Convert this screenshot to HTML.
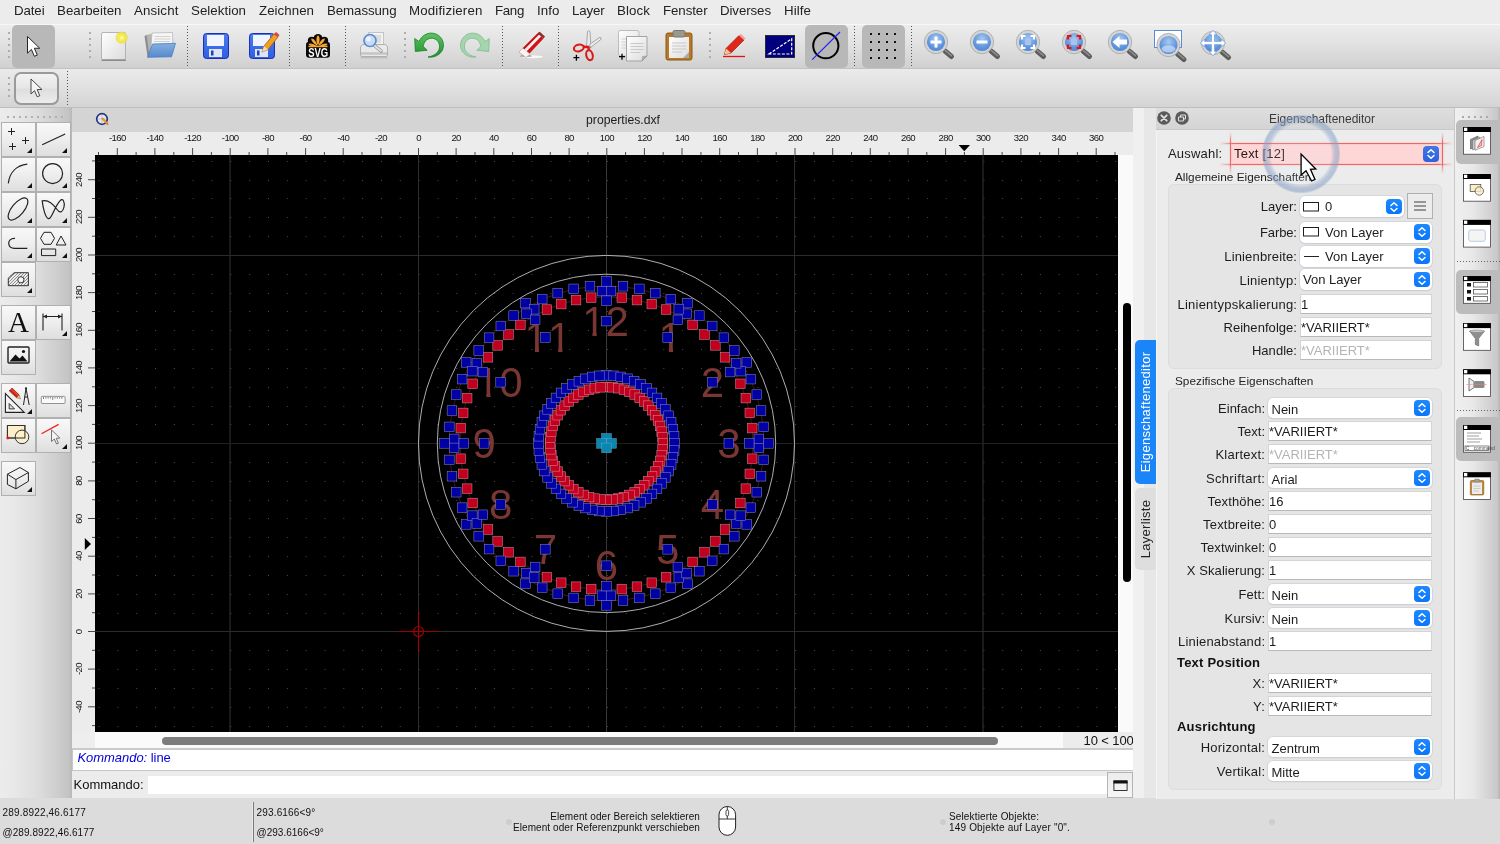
<!DOCTYPE html>
<html lang="de"><head><meta charset="utf-8"><title>properties.dxf</title>
<style>
*{box-sizing:border-box;margin:0;padding:0}
html{background:#ececec}body{will-change:transform;background:transparent}html,body{width:1500px;height:844px;overflow:hidden;font-family:"Liberation Sans",sans-serif;color:#1e1e1e}
.abs{position:absolute}
#menubar{position:absolute;left:0;top:0;width:1500px;height:24px;background:#ececec}
#menubar span{position:absolute;top:2px;font-size:13.3px;line-height:17px;color:#222;white-space:nowrap}
#tb1{position:absolute;left:0;top:24px;width:1500px;height:45px;background:linear-gradient(#ececec,#e3e3e3 40%,#d0d0d0);border-top:1px solid #f7f7f7;border-bottom:1px solid #c2c2c2}
#tb2{position:absolute;left:0;top:69px;width:1500px;height:39px;background:linear-gradient(#eaeaea,#e0e0e0 50%,#d4d4d4);border-bottom:1px solid #bdbdbd}
.hd{position:absolute;width:2px;background-image:linear-gradient(#adadad 2px,transparent 2px);background-size:2px 6px}
.sep{position:absolute;width:1px;background-image:linear-gradient(#555 1px,transparent 1px);background-size:1px 3px}
.selbtn{position:absolute;background:#b8b8b8;border-radius:5px}
svg{position:absolute;overflow:visible}
#left{position:absolute;left:0;top:108px;width:72px;height:690px;background:linear-gradient(90deg,#ececec,#e8e8e8 20%,#dedede 50%,#d0d0d0 75%,#c4c4c4 95%,#b8b8b8)}
.tbtn{position:absolute;width:35px;height:35px;background:linear-gradient(#f8f8f8,#efefef 45%,#dedede);border:1px solid #b0b0b0}
.tbtn i{position:absolute;right:3.2px;bottom:3.2px;width:0;height:0;border-left:5.2px solid transparent;border-bottom:5.2px solid #111}
#tabbar{position:absolute;left:72px;top:108px;width:1061px;height:24px;background:#d4d4d4}
#rulh{position:absolute;left:72px;top:132px;width:1046px;height:23px;background:#ececec;overflow:hidden}
#rulv{position:absolute;left:72px;top:155px;width:23px;height:577px;background:#ececec;overflow:hidden}
.rl{position:absolute;font-size:9.6px;line-height:12px;color:#161616;white-space:nowrap;letter-spacing:-0.62px}
#canvas{position:absolute;left:95px;top:155px;width:1023px;height:577px;background:#000;overflow:hidden}
#status{position:absolute;left:0;top:798px;width:1500px;height:46px;background:#dcdcdc}
.st{position:absolute;font-size:10px;line-height:12px;color:#111;white-space:nowrap}
.lbl{position:absolute;font-size:13px;line-height:16px;color:#1c1c1c;white-space:nowrap;text-align:right}
.inp{position:absolute;height:20px;background:#fff;border:1px solid #d4d4d4;border-bottom-color:#b8b8b8;font-size:13px;line-height:20px;padding-left:0.5px;color:#1c1c1c;white-space:nowrap}
.inp.dis{color:#b4b4b4}
.cmb{position:absolute;height:21px;background:#fff;border-radius:5px;box-shadow:0 0 0 0.8px #cdd1d8,0 1px 1.2px rgba(0,0,0,.16);font-size:13px;line-height:23.5px;padding-left:4px;color:#1c1c1c;white-space:nowrap}
.cmb b{position:absolute;right:2px;top:2.7px;width:15.6px;height:15.4px;border-radius:4px;background:linear-gradient(#1f88ff,#0a76fb)}.cmb.g1{line-height:22px}
.grp{position:absolute;background:#e5e5e5;border:1px solid #dcdcdc;border-radius:6px}
.gt{position:absolute;font-size:11.8px;line-height:14px;color:#222;white-space:nowrap}
.bold{position:absolute;font-size:13px;font-weight:bold;line-height:16px;color:#111;white-space:nowrap}
</style></head><body>
<div id="menubar">
<span style="left:14px;letter-spacing:-0.109px">Datei</span>
<span style="left:57px;letter-spacing:0.017px">Bearbeiten</span>
<span style="left:134px;letter-spacing:0.127px">Ansicht</span>
<span style="left:191px;letter-spacing:0.033px">Selektion</span>
<span style="left:259px;letter-spacing:0.037px">Zeichnen</span>
<span style="left:327px;letter-spacing:-0.080px">Bemassung</span>
<span style="left:409px;letter-spacing:0.151px">Modifizieren</span>
<span style="left:495px;letter-spacing:-0.328px">Fang</span>
<span style="left:537px;letter-spacing:0.078px">Info</span>
<span style="left:572px;letter-spacing:-0.153px">Layer</span>
<span style="left:617px;letter-spacing:0.097px">Block</span>
<span style="left:663px;letter-spacing:-0.085px">Fenster</span>
<span style="left:720px;letter-spacing:-0.092px">Diverses</span>
<span style="left:784px;letter-spacing:0.078px">Hilfe</span>
</div><div id="tb1"></div><div id="tb2"></div>
<div class="selbtn" style="left:12px;top:25px;width:43px;height:43px"></div>
<div class="selbtn" style="left:805px;top:25px;width:43px;height:43px"></div>
<div class="selbtn" style="left:862px;top:25px;width:43px;height:43px"></div>
<div class="hd" style="left:8px;top:32px;height:26px"></div>
<div class="hd" style="left:89px;top:32px;height:26px"></div>
<div class="hd" style="left:404px;top:32px;height:26px"></div>
<div class="hd" style="left:709px;top:32px;height:26px"></div>
<div class="hd" style="left:7.5px;top:77px;height:20px"></div>
<div class="sep" style="left:187px;top:26px;height:41px"></div>
<div class="sep" style="left:289px;top:26px;height:41px"></div>
<div class="sep" style="left:345px;top:26px;height:41px"></div>
<div class="sep" style="left:502px;top:26px;height:41px"></div>
<div class="sep" style="left:558px;top:26px;height:41px"></div>
<div class="sep" style="left:854px;top:26px;height:41px"></div>
<div class="sep" style="left:911px;top:26px;height:41px"></div>
<div class="sep" style="left:67px;top:71px;height:35px"></div>
<div class="abs" style="left:14px;top:72px;width:45px;height:33px;border:2px solid #9a9a9a;border-radius:7px;background:linear-gradient(#f2f2f2,#e6e6e6 48%,#dedede 52%,#ececec)"></div>
<svg style="left:0;top:0" width="1500" height="108">
<defs><radialGradient id="lens" cx="0.5" cy="0.35" r="0.7"><stop offset="0" stop-color="#a8c8f0"/><stop offset="0.6" stop-color="#5f95dc"/><stop offset="1" stop-color="#4a7fd0"/></radialGradient><linearGradient id="pg" x1="0" y1="0" x2="1" y2="1"><stop offset="0" stop-color="#fff"/><stop offset="1" stop-color="#dcdcdc"/></linearGradient><linearGradient id="fl" x1="0" y1="0" x2="0" y2="1"><stop offset="0" stop-color="#4b7cf0"/><stop offset="1" stop-color="#2f5fe0"/></linearGradient><linearGradient id="gr" x1="0" y1="0" x2="0" y2="1"><stop offset="0" stop-color="#5fc45f"/><stop offset="1" stop-color="#1f8f2f"/></linearGradient><radialGradient id="glow"><stop offset="0" stop-color="#fffbe0"/><stop offset="0.35" stop-color="#f8ee50"/><stop offset="0.8" stop-color="#f0e040" stop-opacity="0.85"/><stop offset="1" stop-color="#e8d838" stop-opacity="0"/></radialGradient><linearGradient id="fold" x1="0" y1="0" x2="0" y2="1"><stop offset="0" stop-color="#86b0e2"/><stop offset="1" stop-color="#5688cc"/></linearGradient></defs>
<path transform="translate(27.5,36.5) scale(0.98)" d="M0 0 L0 17 L4 13.2 L7 20.2 L10 19 L7 12 L12.5 12 Z" fill="#fff" stroke="#222" stroke-width="1" stroke-linejoin="round"/>
<path transform="translate(31,79) scale(0.88)" d="M0 0 L0 17 L4 13.2 L7 20.2 L10 19 L7 12 L12.5 12 Z" fill="#f4f4f4" stroke="#333" stroke-width="1" stroke-linejoin="round"/>
<rect x="101.5" y="32.500" width="24" height="27" rx="1.500" fill="url(#pg)" stroke="#b4b4b4"/><path d="M101.500 60.300 H126" stroke="#8c8c8c" stroke-width="1.400"/><circle cx="121.700" cy="37.700" r="6.600" fill="url(#glow)"/>
<path d="M144.500 36 L148 34.500 L150 55.500 L147.500 56.500 Z" fill="#8c8c8c"/><path d="M146.500 35.500 L151.500 33.500 L153 54 L149.500 55.500 Z" fill="#b4b4b4"/><path d="M152 33 L172.500 32.500 L173 50 L150.500 53 Z" fill="#f6f6f6" stroke="#b0b0b0" stroke-width="0.700"/><path d="M154.500 36.500 H170.500 M154.500 39 H170.500 M154 41.500 H170" stroke="#cfcfcf" stroke-width="1"/><path d="M152.500 44 L175.500 43.300 L171.500 56.800 L147.500 57.300 Z" fill="url(#fold)" stroke="#4a7cc0" stroke-width="0.800" stroke-linejoin="round"/>
<rect x="203.5" y="33.5" width="25" height="25" rx="3" fill="url(#fl)" stroke="#1c2fb0"/><rect x="207" y="35" width="17" height="11" fill="#f0f4ff"/><rect x="209" y="49" width="13" height="8" fill="#dde4f4"/><rect x="211" y="50.5" width="2.5" height="5" fill="#2040c0"/>
<rect x="249.5" y="33.5" width="25" height="25" rx="3" fill="url(#fl)" stroke="#1c2fb0"/><rect x="253" y="35" width="17" height="11" fill="#f0f4ff"/><rect x="255" y="49" width="13" height="8" fill="#dde4f4"/><rect x="257" y="50.5" width="2.5" height="5" fill="#2040c0"/>
<path d="M262 52 L264 46 L274 34 L278 37 L268 49.5 Z" fill="#f0a020" stroke="#b05a10" stroke-width="0.8"/><path d="M262 52 L264 46 L268 49.5Z" fill="#f8d8b0"/><path d="M274 34 L276 32 L279.5 35 L278 37Z" fill="#e04040"/>
<g fill="#0a0a0a"><circle cx="318" cy="38.300" r="4.400"/><circle cx="311.800" cy="40.800" r="4"/><circle cx="324.200" cy="40.800" r="4"/><circle cx="309.300" cy="45" r="3.300"/><circle cx="326.700" cy="45" r="3.300"/><rect x="309" y="40" width="18" height="6"/></g><rect x="306" y="44.500" width="24" height="13.200" rx="3" fill="#0a0a0a"/><g fill="#f8a62c"><path d="M318 45.500 C315.800 42 316 36.500 318 35.300 C320 36.500 320.200 42 318 45.500Z"/><path d="M317.300 45.800 C313.800 44.300 310.800 40.500 311.300 38.600 C313.500 38.300 316.800 42 317.300 45.800Z"/><path d="M318.700 45.800 C322.200 44.300 325.200 40.500 324.700 38.600 C322.500 38.300 319.200 42 318.700 45.800Z"/><path d="M316.800 46.300 C313.500 46.800 309.300 45.800 308.300 44 C309.800 42.700 314.300 43.800 316.800 46.300Z"/><path d="M319.200 46.300 C322.500 46.800 326.700 45.800 327.700 44 C326.200 42.700 321.700 43.800 319.200 46.300Z"/><rect x="308.500" y="45.600" width="19" height="1.600"/></g><text x="318.200" y="56.800" font-size="12.400" font-weight="bold" fill="#fff" text-anchor="middle" font-family="'Liberation Sans',sans-serif" textLength="20" lengthAdjust="spacingAndGlyphs">SVG</text>
<rect x="368.5" y="32.5" width="15" height="13" fill="#f2f2f2" stroke="#c4c4c4"/><rect x="371" y="35" width="10" height="8" fill="#dcdcdc"/><path d="M362.5 44.500 L385.500 44.500 L387.500 47 V55 Q387.500 56.500 386 56.500 H362 Q360.500 56.500 360.500 55 V47 Z" fill="#e9e9e9" stroke="#b0b0b0"/><path d="M361 53.500 H387" stroke="#c4c4c4" stroke-width="2.500"/><path d="M360.500 57.800 H387.500" stroke="#9a9a9a" stroke-width="1" opacity="0.6"/><path d="M374.500 45.500 L381 51" stroke="#9a9a9a" stroke-width="3.600" stroke-linecap="round"/><path d="M374.500 45.500 L381 51" stroke="#e4e4e4" stroke-width="1.800" stroke-linecap="round"/><circle cx="370" cy="40.500" r="6" fill="#c8dcf4" stroke="#5a8cd4" stroke-width="1.700"/><circle cx="368.500" cy="39" r="2.500" fill="#eaf2fc"/>
<path d="M414.7 38.5 L415.3 51.5 L427.2 50.3 L423.2 46.5 C424 40.5 428.5 37.8 432.5 38.2 C438 39 440.8 44.500 439 49.500 C437.500 53.500 433.500 56 428 57 C434 58 440 55 442.5 50 C445.5 43 441.500 34.500 433 33.200 C427 32.500 422 35.500 419 41.500 Z" fill="url(#gr)" stroke="#1e7d30" stroke-width="0.8" stroke-linejoin="round"/>
<path transform="translate(904,0) scale(-1,1)" d="M414.7 38.5 L415.3 51.5 L427.2 50.3 L423.2 46.5 C424 40.5 428.5 37.8 432.5 38.2 C438 39 440.8 44.500 439 49.500 C437.500 53.500 433.500 56 428 57 C434 58 440 55 442.5 50 C445.5 43 441.500 34.500 433 33.200 C427 32.500 422 35.500 419 41.500 Z" fill="#9ed4a8" stroke="#74b886" stroke-width="0.8" stroke-linejoin="round" opacity="0.9"/>
<ellipse cx="532" cy="56.800" rx="11" ry="1.500" fill="#fff" opacity="0.85"/><ellipse cx="526" cy="56" rx="6" ry="1.200" fill="#8a4040" opacity="0.5"/><path d="M519 52 L537.500 33.500 L543.500 38.500 L526 57.200 Z" fill="#d01414"/><path d="M522.500 48.500 L539.500 31.800 L542.300 34.200 L525.300 51.200 Z" fill="#c01010"/><path d="M523.800 50 L540.600 33 L542.500 35 L526 52 Z" fill="#fff" opacity="0.92"/><path d="M537.500 33.500 L539.500 31.800 L545 36.500 L543.500 38.500Z" fill="#8a3030"/><path d="M519 52 L522.800 48.200 L530 54 L526 57.400 Z" fill="#f6f6f6" stroke="#c0b0b0" stroke-width="0.500"/>
<path d="M586.500 47 L587.500 31.500 Q588.700 30 590 31.500 L590.800 48 Z" fill="#ececec" stroke="#8a8a8a" stroke-width="0.700"/><path d="M589.500 44.500 L600 37.200 Q601.500 37.500 600.800 39.500 L590.500 47.500 Z" fill="#ececec" stroke="#8a8a8a" stroke-width="0.700"/><ellipse cx="578.800" cy="48" rx="5" ry="3.300" fill="none" stroke="#d81a1a" stroke-width="2.100" transform="rotate(-14 578.800 48)"/><ellipse cx="589.500" cy="55.200" rx="3.200" ry="5" fill="none" stroke="#d81a1a" stroke-width="2.100" transform="rotate(-14 589.500 55.200)"/><path d="M583.500 46.800 L588.500 47 L588.800 50.500" stroke="#d81a1a" stroke-width="2.400" fill="none" stroke-linejoin="round"/><path d="M573.400 57.700 H579.400 M576.400 54.700 V60.700" stroke="#000" stroke-width="1.300"/>
<rect x="618.5" y="30.500" width="20.500" height="25.500" rx="2" fill="url(#pg)" stroke="#bcbcbc"/><path d="M621.500 39H627M621.500 42H627M621.500 45H627M621.500 48H627" stroke="#d0d0d0" stroke-width="1"/><path d="M626.500 36.500 H647 V56 L642 61 H626.500 Z" fill="url(#pg)" stroke="#a4a4a4"/><path d="M642 61 L642.500 56.500 L647 56 Z" fill="#b0b0b0" stroke="#909090" stroke-width="0.500"/><path d="M630.500 43.500H643.500M630.500 46.500H643.500M630.500 49.500H643.500M630.500 52.500H640.500" stroke="#c8c8c8" stroke-width="1"/><path d="M619 56.700 H625 M622 53.700 V59.700" stroke="#000" stroke-width="1.300"/>
<rect x="666" y="33" width="26" height="27" rx="2" fill="#b87828" stroke="#8a5a18"/><rect x="669" y="37" width="20" height="21" fill="url(#pg)"/><rect x="673" y="30.5" width="12" height="6.5" rx="1.5" fill="#9a9a88" stroke="#777"/><path d="M672 43H686M672 46H686M672 49H686M672 52H682" stroke="#c8c8c8" stroke-width="1"/><path d="M683 58 L689 52 L689 58Z" fill="#aaa"/>
<path d="M723 56.5 H745" stroke="#e81010" stroke-width="1.3"/><path d="M724.5 54.5 L726 48.5 L739 35.5 L744 40 L731 53 Z" fill="#e02818" stroke="#a01808" stroke-width="0.7"/><path d="M724.5 54.5 L726 48.5 L731 53Z" fill="#f0c898"/><path d="M739 35.5 L741 34 L745.5 38.5 L744 40Z" fill="#f0a0a0"/>
<rect x="765.5" y="35.500" width="29" height="22" fill="#00007e" stroke="#2a2a3a"/><path d="M769 54 L791.700 38.700 V54 Z" fill="none" stroke="#fff" stroke-width="1.2" stroke-dasharray="3 1.5"/>
<circle cx="825.8" cy="45.7" r="12.6" fill="none" stroke="#000" stroke-width="2"/><path d="M812.2 59.600 L840 32" stroke="#1a28e8" stroke-width="1.200"/>
<g fill="#111">
<rect x="870" y="33" width="2" height="2"/>
<rect x="870" y="41" width="2" height="2"/>
<rect x="870" y="49" width="2" height="2"/>
<rect x="870" y="57" width="2" height="2"/>
<rect x="878" y="33" width="2" height="2"/>
<rect x="878" y="41" width="2" height="2"/>
<rect x="878" y="49" width="2" height="2"/>
<rect x="878" y="57" width="2" height="2"/>
<rect x="886" y="33" width="2" height="2"/>
<rect x="886" y="41" width="2" height="2"/>
<rect x="886" y="49" width="2" height="2"/>
<rect x="886" y="57" width="2" height="2"/>
<rect x="894" y="33" width="2" height="2"/>
<rect x="894" y="41" width="2" height="2"/>
<rect x="894" y="49" width="2" height="2"/>
<rect x="894" y="57" width="2" height="2"/>
</g>
<g><path d="M945 51 L951.5 56.5" stroke="#5c5c5c" stroke-width="5" stroke-linecap="round"/><path d="M945.5 50.6 L951.5 55.6" stroke="#8c8c8c" stroke-width="1.6" stroke-linecap="round"/><circle cx="936" cy="42" r="10.3" fill="url(#lens)" stroke="#d4d4d4" stroke-width="2.4"/><circle cx="936" cy="42" r="11.7" fill="none" stroke="#9c9c9c" stroke-width="0.7"/><path d="M930.5 42H941.5M936 36.5V47.5" stroke="#fff" fill="none" stroke-width="3"/></g>
<g><path d="M991 51 L997.5 56.5" stroke="#5c5c5c" stroke-width="5" stroke-linecap="round"/><path d="M991.5 50.6 L997.5 55.6" stroke="#8c8c8c" stroke-width="1.6" stroke-linecap="round"/><circle cx="982" cy="42" r="10.3" fill="url(#lens)" stroke="#d4d4d4" stroke-width="2.4"/><circle cx="982" cy="42" r="11.7" fill="none" stroke="#9c9c9c" stroke-width="0.7"/><path d="M976.5 42H987.5" stroke="#fff" fill="none" stroke-width="3"/></g>
<g><path d="M1037 51 L1043.5 56.5" stroke="#5c5c5c" stroke-width="5" stroke-linecap="round"/><path d="M1037.5 50.6 L1043.5 55.6" stroke="#8c8c8c" stroke-width="1.6" stroke-linecap="round"/><circle cx="1028" cy="42" r="10.3" fill="url(#lens)" stroke="#d4d4d4" stroke-width="2.4"/><circle cx="1028" cy="42" r="11.7" fill="none" stroke="#9c9c9c" stroke-width="0.7"/><rect x="1025" y="39" width="6" height="6" fill="#a8c4ee"/><path d="M1022 39.5V36H1025.5M1030.5 36H1034V39.5M1034 44.5V48H1030.5M1025.5 48H1022V44.5" stroke="#fff" stroke-width="2.2" fill="none"/></g>
<g><path d="M1083 51 L1089.5 56.5" stroke="#5c5c5c" stroke-width="5" stroke-linecap="round"/><path d="M1083.5 50.6 L1089.5 55.6" stroke="#8c8c8c" stroke-width="1.6" stroke-linecap="round"/><circle cx="1074" cy="42" r="10.3" fill="url(#lens)" stroke="#d4d4d4" stroke-width="2.4"/><circle cx="1074" cy="42" r="11.7" fill="none" stroke="#9c9c9c" stroke-width="0.7"/><rect x="1071" y="39" width="6" height="6" fill="#a8c4ee"/><path d="M1068 39.5V36H1071.5M1076.5 36H1080V39.5M1080 44.5V48H1076.5M1071.5 48H1068V44.5" stroke="#f01010" stroke-width="2.2" fill="none"/></g>
<g><path d="M1129 51 L1135.5 56.5" stroke="#5c5c5c" stroke-width="5" stroke-linecap="round"/><path d="M1129.5 50.6 L1135.5 55.6" stroke="#8c8c8c" stroke-width="1.6" stroke-linecap="round"/><circle cx="1120" cy="42" r="10.3" fill="url(#lens)" stroke="#d4d4d4" stroke-width="2.4"/><circle cx="1120" cy="42" r="11.7" fill="none" stroke="#9c9c9c" stroke-width="0.7"/><path d="M1112.5 42 L1119.5 36 V39.6 H1127 V44.4 H1119.5 V48 Z" fill="#fff"/></g>
<rect x="1154.5" y="30.5" width="27" height="17" fill="#fff" stroke="#5a8ad8"/>
<g><path d="M1177.5 54 L1184.0 59.5" stroke="#5c5c5c" stroke-width="5" stroke-linecap="round"/><path d="M1178.0 53.6 L1184.0 58.6" stroke="#8c8c8c" stroke-width="1.6" stroke-linecap="round"/><circle cx="1168.5" cy="45" r="10.3" fill="url(#lens)" stroke="#d4d4d4" stroke-width="2.4"/><circle cx="1168.5" cy="45" r="11.7" fill="none" stroke="#9c9c9c" stroke-width="0.7"/><ellipse cx="1168.5" cy="49" rx="7" ry="3.5" fill="#cfe0f6" opacity="0.7"/></g>
<g><path d="M1222 52 L1228.5 57.5" stroke="#5c5c5c" stroke-width="5" stroke-linecap="round"/><path d="M1222.5 51.6 L1228.5 56.6" stroke="#8c8c8c" stroke-width="1.6" stroke-linecap="round"/><circle cx="1213" cy="43" r="10.3" fill="url(#lens)" stroke="#d4d4d4" stroke-width="2.4"/><circle cx="1213" cy="43" r="11.7" fill="none" stroke="#9c9c9c" stroke-width="0.7"/><path d="M1202 43H1224M1213 32V54" stroke="#6a9ade" stroke-width="4"/><path d="M1200.3 43l4.500-4v8zM1225.700 43l-4.500-4v8zM1213 30.300l-4 4.500h8zM1213 55.700l-4-4.500h8z" fill="#fff" stroke="#6a9ade" stroke-width="0.800"/><path d="M1202 43H1224M1213 32V54" stroke="#fff" stroke-width="2.400"/></g>
</svg><div id="left">
<div class="abs" style="left:7px;top:8px;width:58px;height:2px;background-image:linear-gradient(90deg,#b0b0b0 2px,transparent 2px);background-size:6px 2px"></div>
<div class="tbtn" style="left:1px;top:14px;height:35px"><i></i></div>
<div class="tbtn" style="left:36px;top:14px;height:35px"><i></i></div>
<div class="tbtn" style="left:1px;top:49px;height:35px"><i></i></div>
<div class="tbtn" style="left:36px;top:49px;height:35px"><i></i></div>
<div class="tbtn" style="left:1px;top:84px;height:35px"><i></i></div>
<div class="tbtn" style="left:36px;top:84px;height:35px"><i></i></div>
<div class="tbtn" style="left:1px;top:119px;height:35px"><i></i></div>
<div class="tbtn" style="left:36px;top:119px;height:35px"><i></i></div>
<div class="tbtn" style="left:1px;top:154px;height:35px"><i></i></div>
<div class="tbtn" style="left:1px;top:197px;height:35px"></div>
<div class="tbtn" style="left:36px;top:197px;height:35px"><i></i></div>
<div class="tbtn" style="left:1px;top:232px;height:35px"></div>
<div class="tbtn" style="left:1px;top:275px;height:35px"><i></i></div>
<div class="tbtn" style="left:36px;top:275px;height:35px"></div>
<div class="tbtn" style="left:1px;top:310px;height:35px"></div>
<div class="tbtn" style="left:36px;top:310px;height:35px"><i></i></div>
<div class="tbtn" style="left:1px;top:353px;height:35px"><i></i></div>
<svg style="left:0;top:0" width="72" height="692" viewBox="0 108 72 692" fill="none" stroke="#222" stroke-width="1.2">
<path d="M8 131.500H15M11.500 128V135M22 140.500H29M25.500 137V144M9 146.500H16M12.500 143V150" stroke-width="1" shape-rendering="crispEdges"/>
<path d="M42.200 144.700 L65.200 134"/>
<path d="M8.300 183.400 C9.500 173 16 165.500 27.300 164.200"/>
<circle cx="52.600" cy="173.600" r="10"/>
<ellipse cx="18" cy="209" rx="13.5" ry="6" transform="rotate(-50 18 209)"/>
<path d="M42.200 200.900 C43 208 45.500 218.500 48.600 218.700 C52 219 54 207 60.400 200.300 C63 198 65 202 64 207 C63 212 60 213.500 57.500 210 C54 205 48 199.500 42.200 200.900 Z"/>
<path d="M15 238.300 C10.500 238 8.500 241 8.700 243.500 C9 247 11.500 248.300 14.500 248.300 H27.300"/>
<path d="M44 232.300 H51 L54.500 238.300 L51 244.300 H44 L40.500 238.300 Z M61 236 L66 245 H56.200Z M41.500 249 H55.700 V255.600 H41.500Z" stroke-width="1"/>
<defs><clipPath id="hc"><path d="M8.300 285.700 V278.100 L14.200 272.700 H28.400 V285.700 Z"/></clipPath></defs><path d="M8.300 285.700 V278.100 L14.200 272.700 H28.400 V285.700 Z" fill="#eeeeee" stroke="none"/><path d="M-3.7 285.7 L9.3 272.7M-0.7 285.7 L12.3 272.7M2.3 285.7 L15.3 272.7M5.3 285.7 L18.3 272.7M8.3 285.7 L21.3 272.7M11.3 285.7 L24.3 272.7M14.3 285.7 L27.3 272.7M17.3 285.7 L30.3 272.7M20.3 285.7 L33.3 272.7M23.3 285.7 L36.3 272.7M26.3 285.7 L39.3 272.7" stroke="#555" stroke-width="0.650" clip-path="url(#hc)"/><path d="M8.300 285.700 V278.100 L14.200 272.700 H28.400 V285.700 Z" fill="none" stroke="#333" stroke-width="1"/><circle cx="20.900" cy="279.800" r="3.100" fill="#f6f6f6" stroke="#333" stroke-width="1"/>
<g transform="translate(0,-1.500)"><path d="M43 332 V315 M62 332 V315 M43 318 H62" stroke-width="1.100"/><path d="M43 318l4-2v4zM62 318l-4-2v4z" fill="#222" stroke="none"/></g>
<g transform="translate(0.500,-1.500)"><rect x="7.500" y="348.500" width="21" height="16" rx="1" stroke-width="1.400"/><path d="M9 363 L15 356 L19 360 L22 357 L27 363 Z" fill="#111" stroke="none"/><circle cx="23" cy="353" r="1.600" fill="#111" stroke="none"/></g>
<path d="M5.400 393.500 V412.400 H24.200 Z" fill="#f4f4f4" stroke="#222" stroke-width="1.100" stroke-linejoin="miter"/><path d="M9.200 403.500 V408.900 H14.500 Z" fill="#e0e0e0" stroke="#222" stroke-width="0.900"/>
<path d="M9.200 390.800 L12 388 L19.300 395 L16.600 397.800 Z" fill="#d8200c" stroke="#7a1408" stroke-width="0.600"/><path d="M16.600 397.800 L19.300 395 L20.600 399 Z" fill="#e8c090" stroke="#7a5030" stroke-width="0.400"/><path d="M10.300 389.700 L11.200 388.800 L18.600 395.800" stroke="#f08070" stroke-width="0.700" fill="none"/>
<path d="M26 388.500 L23.500 405 M26 388.500 L29.200 405 M24.600 397 H27.600" stroke="#222" stroke-width="1" fill="none"/><circle cx="26" cy="388.300" r="1.100" fill="#222" stroke="none"/>
<rect x="41.300" y="396.400" width="23.800" height="7.100" rx="0.800" fill="#fafafa" stroke="#888" stroke-width="0.900"/><path d="M43.500 397V399M45.800 397V398.600M48.100 397V398.600M50.400 397V398.600M52.700 397V400M55 397V398.600M57.300 397V398.600M59.600 397V398.600M61.900 397V399" stroke="#555" stroke-width="0.700"/>
<rect x="7.400" y="425.500" width="17.500" height="12.500" fill="#fdf0c8" stroke="#333" stroke-width="1"/><circle cx="22" cy="436.900" r="6.800" fill="#fdf0c8" fill-opacity="0.750" stroke="#333" stroke-width="1"/><rect x="7.400" y="425.500" width="17.500" height="12.500" fill="none" stroke="#333" stroke-width="0.900"/><circle cx="7.800" cy="438" r="1.400" fill="#f01818" stroke="none"/>
<path d="M41.500 433.800 L58.600 424.400" stroke="#f02020" stroke-width="1.200"/><path d="M51.500 429.800 V441.500 L54.300 439 L56.600 444 L58.400 443.200 L56.200 438.300 L59.800 438.100 Z" fill="#f4f4f4" stroke="#666" stroke-width="0.900" stroke-linejoin="round"/>
<path d="M19.900 467.500 L28.400 472.500 L15.900 479.600 L7.400 474.200 Z M7.400 474.200 V484.500 L15.900 488.800 L28.400 481.300 V472.500 M15.900 479.600 V488.800" stroke-width="1" stroke-linejoin="round"/>
</svg>
<div class="abs" style="left:4.5px;top:197px;width:28px;height:34px;font-family:'Liberation Serif',serif;font-size:29px;line-height:34px;text-align:center;color:#111">A</div>
</div><div id="tabbar"></div>
<div class="abs" style="left:523px;top:112px;width:200px;text-align:center;font-size:12.2px;line-height:16px;color:#1c1c1c;letter-spacing:0px">properties.dxf</div>
<svg style="left:95px;top:111px" width="16" height="16"><circle cx="7" cy="8" r="5.300" fill="#e6e8f0" stroke="#26357c" stroke-width="1.700"/><path d="M3 8H11M7 4V12" stroke="#b8b8c4" stroke-width="0.700"/><path d="M6.500 7.500 L8 6.800 L12.800 12 L11.600 13.300 Z" fill="#f0a020" stroke="#b86a10" stroke-width="0.400"/><path d="M11.600 13.300 L12.800 12 L13.600 13.800Z" fill="#e03020"/></svg>
<div class="abs" style="left:72px;top:132px;width:23px;height:23px;background:#ececec"></div>
<div class="abs" style="left:1118px;top:132px;width:15px;height:23px;background:#ececec"></div><div class="abs" style="left:1118px;top:155px;width:15px;height:577px;background:#fafafa"></div>
<div class="abs" style="left:1123px;top:303px;width:8px;height:279px;background:#000;border-radius:4px"></div>
<div class="abs" style="left:72px;top:732px;width:1061px;height:17px;background:#fafafa"></div>
<div class="abs" style="left:72px;top:732px;width:23px;height:17px;background:#eeeeee"></div>
<div class="abs" style="left:161.5px;top:737px;width:836px;height:7.5px;background:#7c7c7c;border-radius:4px"></div>
<div class="abs" style="left:1063px;top:732px;width:70px;height:17px;background:#ececec"></div>
<div class="abs" style="left:1033.7px;top:733px;width:100px;text-align:right;font-size:13px;line-height:16px;color:#111;letter-spacing:-0.1px">10 &lt; 100</div>
<div class="abs" style="left:72px;top:748px;width:1061px;height:23px;background:#fff;border:1px solid #c6c6c6;border-top:2px solid #cacaca;border-right:none"></div>
<div class="abs" style="left:77.5px;top:750px;font-size:13px;line-height:16px;color:#0000d8;white-space:nowrap;letter-spacing:-0.05px"><i>Kommando:</i> line</div>
<div class="abs" style="left:73.5px;top:777px;font-size:13px;line-height:16px;color:#111;letter-spacing:0px">Kommando:</div>
<div class="abs" style="left:148px;top:776px;width:959px;height:18px;background:#fff"></div>
<div class="abs" style="left:1107px;top:772px;width:26px;height:26px;background:linear-gradient(#ececec,#f6f6f6);border:1px solid #b4b4b4"></div>
<svg style="left:1112.5px;top:779.500px" width="16" height="14"><rect x="0.900" y="0.900" width="13.200" height="9.600" fill="#f2f2f2" stroke="#222" stroke-width="0.900"/><rect x="0.500" y="0.500" width="14" height="3" fill="#111"/></svg>
<div id="status"></div>
<div class="st" style="left:2.5px;top:806.5px;letter-spacing:0.18px">289.8922,46.6177</div>
<div class="st" style="left:2.5px;top:827px;letter-spacing:0.07px">@289.8922,46.6177</div>
<div class="abs" style="left:253px;top:802px;width:1px;height:40px;background:#7a7a7a"></div><div class="abs" style="left:252px;top:802px;width:1px;height:40px;background:#eaeaea"></div>
<div class="st" style="left:256.5px;top:806.5px;letter-spacing:0.17px">293.6166&lt;9°</div>
<div class="st" style="left:256.5px;top:827px;letter-spacing:0.01px">@293.6166&lt;9°</div>
<div class="abs" style="left:506px;top:819px;width:6px;height:6px;border-radius:3px;background:#cdcdcd"></div>
<div class="abs" style="left:940px;top:819px;width:6px;height:6px;border-radius:3px;background:#cdcdcd"></div>
<div class="abs" style="left:1269px;top:819px;width:6px;height:6px;border-radius:3px;background:#cdcdcd"></div>
<div class="st" style="left:400px;width:300px;text-align:right;top:811.4px;letter-spacing:0.08px">Element oder Bereich selektieren</div>
<div class="st" style="left:400px;width:300px;text-align:right;top:822.4px;letter-spacing:0.08px">Element oder Referenzpunkt verschieben</div>
<svg style="left:717px;top:805px" width="22" height="32"><rect x="2" y="1.500" width="16.600" height="28.800" rx="8.300" fill="#fff" stroke="#222" stroke-width="1"/><path d="M2 14 H18.600 M10.300 1.500 V5 M10.300 11 V14" stroke="#222" stroke-width="0.900"/><rect x="9" y="5" width="2.600" height="6" rx="1.300" fill="#fff" stroke="#222" stroke-width="0.800"/></svg>
<div class="st" style="left:949px;top:811px;letter-spacing:0.14px">Selektierte Objekte:</div>
<div class="st" style="left:949px;top:822px;letter-spacing:0.17px">149 Objekte auf Layer "0".</div><div id="rulh">
<span class="rl" style="left:15.3px;width:60px;text-align:center;top:0px">-160</span>
<span class="rl" style="left:52.9px;width:60px;text-align:center;top:0px">-140</span>
<span class="rl" style="left:90.6px;width:60px;text-align:center;top:0px">-120</span>
<span class="rl" style="left:128.2px;width:60px;text-align:center;top:0px">-100</span>
<span class="rl" style="left:165.9px;width:60px;text-align:center;top:0px">-80</span>
<span class="rl" style="left:203.6px;width:60px;text-align:center;top:0px">-60</span>
<span class="rl" style="left:241.2px;width:60px;text-align:center;top:0px">-40</span>
<span class="rl" style="left:278.9px;width:60px;text-align:center;top:0px">-20</span>
<span class="rl" style="left:316.5px;width:60px;text-align:center;top:0px">0</span>
<span class="rl" style="left:354.1px;width:60px;text-align:center;top:0px">20</span>
<span class="rl" style="left:391.8px;width:60px;text-align:center;top:0px">40</span>
<span class="rl" style="left:429.5px;width:60px;text-align:center;top:0px">60</span>
<span class="rl" style="left:467.1px;width:60px;text-align:center;top:0px">80</span>
<span class="rl" style="left:504.8px;width:60px;text-align:center;top:0px">100</span>
<span class="rl" style="left:542.4px;width:60px;text-align:center;top:0px">120</span>
<span class="rl" style="left:580.0px;width:60px;text-align:center;top:0px">140</span>
<span class="rl" style="left:617.7px;width:60px;text-align:center;top:0px">160</span>
<span class="rl" style="left:655.4px;width:60px;text-align:center;top:0px">180</span>
<span class="rl" style="left:693.0px;width:60px;text-align:center;top:0px">200</span>
<span class="rl" style="left:730.7px;width:60px;text-align:center;top:0px">220</span>
<span class="rl" style="left:768.3px;width:60px;text-align:center;top:0px">240</span>
<span class="rl" style="left:806.0px;width:60px;text-align:center;top:0px">260</span>
<span class="rl" style="left:843.6px;width:60px;text-align:center;top:0px">280</span>
<span class="rl" style="left:881.2px;width:60px;text-align:center;top:0px">300</span>
<span class="rl" style="left:918.9px;width:60px;text-align:center;top:0px">320</span>
<span class="rl" style="left:956.6px;width:60px;text-align:center;top:0px">340</span>
<span class="rl" style="left:994.2px;width:60px;text-align:center;top:0px">360</span>
<svg style="left:0;top:0" width="1046" height="23"><g stroke="#4a4a4a" stroke-width="1">
<line x1="26.5" y1="20" x2="26.5" y2="23"/>
<line x1="45.3" y1="16" x2="45.3" y2="23"/>
<line x1="64.1" y1="20" x2="64.1" y2="23"/>
<line x1="82.9" y1="16" x2="82.9" y2="23"/>
<line x1="101.8" y1="20" x2="101.8" y2="23"/>
<line x1="120.6" y1="16" x2="120.6" y2="23"/>
<line x1="139.4" y1="20" x2="139.4" y2="23"/>
<line x1="158.2" y1="16" x2="158.2" y2="23"/>
<line x1="177.1" y1="20" x2="177.1" y2="23"/>
<line x1="195.9" y1="16" x2="195.9" y2="23"/>
<line x1="214.7" y1="20" x2="214.7" y2="23"/>
<line x1="233.6" y1="16" x2="233.6" y2="23"/>
<line x1="252.4" y1="20" x2="252.4" y2="23"/>
<line x1="271.2" y1="16" x2="271.2" y2="23"/>
<line x1="290.0" y1="20" x2="290.0" y2="23"/>
<line x1="308.9" y1="16" x2="308.9" y2="23"/>
<line x1="327.7" y1="20" x2="327.7" y2="23"/>
<line x1="346.5" y1="16" x2="346.5" y2="23"/>
<line x1="365.3" y1="20" x2="365.3" y2="23"/>
<line x1="384.1" y1="16" x2="384.1" y2="23"/>
<line x1="403.0" y1="20" x2="403.0" y2="23"/>
<line x1="421.8" y1="16" x2="421.8" y2="23"/>
<line x1="440.6" y1="20" x2="440.6" y2="23"/>
<line x1="459.5" y1="16" x2="459.5" y2="23"/>
<line x1="478.3" y1="20" x2="478.3" y2="23"/>
<line x1="497.1" y1="16" x2="497.1" y2="23"/>
<line x1="515.9" y1="20" x2="515.9" y2="23"/>
<line x1="534.8" y1="16" x2="534.8" y2="23"/>
<line x1="553.6" y1="20" x2="553.6" y2="23"/>
<line x1="572.4" y1="16" x2="572.4" y2="23"/>
<line x1="591.2" y1="20" x2="591.2" y2="23"/>
<line x1="610.0" y1="16" x2="610.0" y2="23"/>
<line x1="628.9" y1="20" x2="628.9" y2="23"/>
<line x1="647.7" y1="16" x2="647.7" y2="23"/>
<line x1="666.5" y1="20" x2="666.5" y2="23"/>
<line x1="685.4" y1="16" x2="685.4" y2="23"/>
<line x1="704.2" y1="20" x2="704.2" y2="23"/>
<line x1="723.0" y1="16" x2="723.0" y2="23"/>
<line x1="741.8" y1="20" x2="741.8" y2="23"/>
<line x1="760.7" y1="16" x2="760.7" y2="23"/>
<line x1="779.5" y1="20" x2="779.5" y2="23"/>
<line x1="798.3" y1="16" x2="798.3" y2="23"/>
<line x1="817.1" y1="20" x2="817.1" y2="23"/>
<line x1="836.0" y1="16" x2="836.0" y2="23"/>
<line x1="854.8" y1="20" x2="854.8" y2="23"/>
<line x1="873.6" y1="16" x2="873.6" y2="23"/>
<line x1="892.4" y1="20" x2="892.4" y2="23"/>
<line x1="911.2" y1="16" x2="911.2" y2="23"/>
<line x1="930.1" y1="20" x2="930.1" y2="23"/>
<line x1="948.9" y1="16" x2="948.9" y2="23"/>
<line x1="967.7" y1="20" x2="967.7" y2="23"/>
<line x1="986.6" y1="16" x2="986.6" y2="23"/>
<line x1="1005.4" y1="20" x2="1005.4" y2="23"/>
<line x1="1024.2" y1="16" x2="1024.2" y2="23"/>
<line x1="1043.0" y1="20" x2="1043.0" y2="23"/>
</g><path d="M886.600 13 h11.400 l-5.700 6.200z" fill="#000"/></svg></div>
<div id="rulv">
<span class="rl" style="left:-23px;width:60px;text-align:center;top:545.8px;transform:rotate(-90deg)">-40</span>
<span class="rl" style="left:-23px;width:60px;text-align:center;top:508.1px;transform:rotate(-90deg)">-20</span>
<span class="rl" style="left:-23px;width:60px;text-align:center;top:470.5px;transform:rotate(-90deg)">0</span>
<span class="rl" style="left:-23px;width:60px;text-align:center;top:432.9px;transform:rotate(-90deg)">20</span>
<span class="rl" style="left:-23px;width:60px;text-align:center;top:395.2px;transform:rotate(-90deg)">40</span>
<span class="rl" style="left:-23px;width:60px;text-align:center;top:357.5px;transform:rotate(-90deg)">60</span>
<span class="rl" style="left:-23px;width:60px;text-align:center;top:319.9px;transform:rotate(-90deg)">80</span>
<span class="rl" style="left:-23px;width:60px;text-align:center;top:282.2px;transform:rotate(-90deg)">100</span>
<span class="rl" style="left:-23px;width:60px;text-align:center;top:244.6px;transform:rotate(-90deg)">120</span>
<span class="rl" style="left:-23px;width:60px;text-align:center;top:206.9px;transform:rotate(-90deg)">140</span>
<span class="rl" style="left:-23px;width:60px;text-align:center;top:169.3px;transform:rotate(-90deg)">160</span>
<span class="rl" style="left:-23px;width:60px;text-align:center;top:131.6px;transform:rotate(-90deg)">180</span>
<span class="rl" style="left:-23px;width:60px;text-align:center;top:94.0px;transform:rotate(-90deg)">200</span>
<span class="rl" style="left:-23px;width:60px;text-align:center;top:56.3px;transform:rotate(-90deg)">220</span>
<span class="rl" style="left:-23px;width:60px;text-align:center;top:18.7px;transform:rotate(-90deg)">240</span>
<svg style="left:0;top:0" width="23" height="577"><g stroke="#4a4a4a" stroke-width="1">
<line x1="20" y1="570.6" x2="23" y2="570.6"/>
<line x1="16" y1="551.8" x2="23" y2="551.8"/>
<line x1="20" y1="533.0" x2="23" y2="533.0"/>
<line x1="16" y1="514.1" x2="23" y2="514.1"/>
<line x1="20" y1="495.3" x2="23" y2="495.3"/>
<line x1="16" y1="476.5" x2="23" y2="476.5"/>
<line x1="20" y1="457.7" x2="23" y2="457.7"/>
<line x1="16" y1="438.9" x2="23" y2="438.9"/>
<line x1="20" y1="420.0" x2="23" y2="420.0"/>
<line x1="16" y1="401.2" x2="23" y2="401.2"/>
<line x1="20" y1="382.4" x2="23" y2="382.4"/>
<line x1="16" y1="363.5" x2="23" y2="363.5"/>
<line x1="20" y1="344.7" x2="23" y2="344.7"/>
<line x1="16" y1="325.9" x2="23" y2="325.9"/>
<line x1="20" y1="307.1" x2="23" y2="307.1"/>
<line x1="16" y1="288.2" x2="23" y2="288.2"/>
<line x1="20" y1="269.4" x2="23" y2="269.4"/>
<line x1="16" y1="250.6" x2="23" y2="250.6"/>
<line x1="20" y1="231.8" x2="23" y2="231.8"/>
<line x1="16" y1="212.9" x2="23" y2="212.9"/>
<line x1="20" y1="194.1" x2="23" y2="194.1"/>
<line x1="16" y1="175.3" x2="23" y2="175.3"/>
<line x1="20" y1="156.5" x2="23" y2="156.5"/>
<line x1="16" y1="137.6" x2="23" y2="137.6"/>
<line x1="20" y1="118.8" x2="23" y2="118.8"/>
<line x1="16" y1="100.0" x2="23" y2="100.0"/>
<line x1="20" y1="81.2" x2="23" y2="81.2"/>
<line x1="16" y1="62.3" x2="23" y2="62.3"/>
<line x1="20" y1="43.5" x2="23" y2="43.5"/>
<line x1="16" y1="24.7" x2="23" y2="24.7"/>
<line x1="20" y1="5.9" x2="23" y2="5.9"/>
</g><path d="M12.800 383 v12 l6.200 -6z" fill="#000"/></svg></div><div id="canvas"><svg style="left:0;top:0" width="1023" height="577" viewBox="95 155 1023 577">
<g stroke="#4e4e4e" stroke-width="1" stroke-dasharray="1 17.825">
<line x1="79.75" y1="744.5" x2="1118" y2="744.5"/>
<line x1="79.75" y1="726.5" x2="1118" y2="726.5"/>
<line x1="79.75" y1="707.5" x2="1118" y2="707.5"/>
<line x1="79.75" y1="688.5" x2="1118" y2="688.5"/>
<line x1="79.75" y1="669.5" x2="1118" y2="669.5"/>
<line x1="79.75" y1="650.5" x2="1118" y2="650.5"/>
<line x1="79.75" y1="631.5" x2="1118" y2="631.5"/>
<line x1="79.75" y1="613.5" x2="1118" y2="613.5"/>
<line x1="79.75" y1="594.5" x2="1118" y2="594.5"/>
<line x1="79.75" y1="575.5" x2="1118" y2="575.5"/>
<line x1="79.75" y1="556.5" x2="1118" y2="556.5"/>
<line x1="79.75" y1="537.5" x2="1118" y2="537.5"/>
<line x1="79.75" y1="518.5" x2="1118" y2="518.5"/>
<line x1="79.75" y1="500.5" x2="1118" y2="500.5"/>
<line x1="79.75" y1="481.5" x2="1118" y2="481.5"/>
<line x1="79.75" y1="462.5" x2="1118" y2="462.5"/>
<line x1="79.75" y1="443.5" x2="1118" y2="443.5"/>
<line x1="79.75" y1="424.5" x2="1118" y2="424.5"/>
<line x1="79.75" y1="406.5" x2="1118" y2="406.5"/>
<line x1="79.75" y1="387.5" x2="1118" y2="387.5"/>
<line x1="79.75" y1="368.5" x2="1118" y2="368.5"/>
<line x1="79.75" y1="349.5" x2="1118" y2="349.5"/>
<line x1="79.75" y1="330.5" x2="1118" y2="330.5"/>
<line x1="79.75" y1="311.5" x2="1118" y2="311.5"/>
<line x1="79.75" y1="293.5" x2="1118" y2="293.5"/>
<line x1="79.75" y1="274.5" x2="1118" y2="274.5"/>
<line x1="79.75" y1="255.5" x2="1118" y2="255.5"/>
<line x1="79.75" y1="236.5" x2="1118" y2="236.5"/>
<line x1="79.75" y1="217.5" x2="1118" y2="217.5"/>
<line x1="79.75" y1="198.5" x2="1118" y2="198.5"/>
<line x1="79.75" y1="180.5" x2="1118" y2="180.5"/>
<line x1="79.75" y1="161.5" x2="1118" y2="161.5"/>
</g>
<g stroke-width="1">
<line x1="230.0" y1="155" x2="230.0" y2="732" stroke="#343434"/>
<line x1="418.5" y1="155" x2="418.5" y2="732" stroke="#2e2e2e"/>
<line x1="606.5" y1="155" x2="606.5" y2="732" stroke="#383838"/>
<line x1="794.5" y1="155" x2="794.5" y2="732" stroke="#2c2c2c"/>
<line x1="983.0" y1="155" x2="983.0" y2="732" stroke="#343434"/>
<line x1="95" y1="255.5" x2="1118" y2="255.5" stroke="#2c2c2c"/>
<line x1="95" y1="443.5" x2="1118" y2="443.5" stroke="#202020"/>
<line x1="95" y1="631.5" x2="1118" y2="631.5" stroke="#2c2c2c"/>
</g>
<g stroke="#a00000" stroke-width="1.2" fill="none"><line x1="398.5" y1="631.5" x2="438.5" y2="631.5"/><line x1="418.5" y1="611.5" x2="418.5" y2="651.5"/><circle cx="418.5" cy="631.5" r="5"/></g>
<g fill="none" stroke="#cccccc" stroke-width="0.85"><circle cx="606.5" cy="443.4" r="188"/><circle cx="606.5" cy="443.4" r="169.2"/></g>
<g fill="none" stroke="#6a2a22" stroke-width="0.6"><circle cx="606.5" cy="443.4" r="157.5"/><circle cx="606.5" cy="443.4" r="146.5"/></g>
<defs><clipPath id="c1"><path d="M0 -30.51 H14.54 V2 H10.27 V-4.68 H0 Z"/></clipPath></defs>
<g font-family="'Liberation Sans',sans-serif" font-size="42.0" fill="#793632">
<g transform="translate(658.55,352.13)" clip-path="url(#c1)"><text x="0" y="0">1</text></g>
<text x="700.72" y="396.89">2</text>
<text x="717.21" y="458.04">3</text>
<text x="700.87" y="519.19">4</text>
<text x="656.01" y="563.96">5</text>
<text x="594.65" y="580.34">6</text>
<text x="533.66" y="563.96">7</text>
<text x="488.89" y="519.19">8</text>
<text x="472.56" y="458.04">9</text>
<g transform="translate(475.99,396.89)" clip-path="url(#c1)"><text x="0" y="0">1</text></g>
<text x="499.35" y="396.89">0</text>
<g transform="translate(524.57,352.13)" clip-path="url(#c1)"><text x="0" y="0">1</text></g>
<g transform="translate(547.93,352.13)" clip-path="url(#c1)"><text x="0" y="0">1</text></g>
<g transform="translate(582.16,335.74)" clip-path="url(#c1)"><text x="0" y="0">1</text></g>
<text x="605.52" y="335.74">2</text>
</g>
<g>
<rect x="601.70" y="382.20" width="9.6" height="9.6" fill="#c0001e" stroke="#d890a0" stroke-width="0.5"/>
<rect x="607.60" y="382.51" width="9.6" height="9.6" fill="#c0001e" stroke="#d890a0" stroke-width="0.5"/>
<rect x="613.43" y="383.43" width="9.6" height="9.6" fill="#c0001e" stroke="#d890a0" stroke-width="0.5"/>
<rect x="619.13" y="384.96" width="9.6" height="9.6" fill="#c0001e" stroke="#d890a0" stroke-width="0.5"/>
<rect x="624.64" y="387.08" width="9.6" height="9.6" fill="#c0001e" stroke="#d890a0" stroke-width="0.5"/>
<rect x="629.90" y="389.76" width="9.6" height="9.6" fill="#c0001e" stroke="#d890a0" stroke-width="0.5"/>
<rect x="634.85" y="392.97" width="9.6" height="9.6" fill="#c0001e" stroke="#d890a0" stroke-width="0.5"/>
<rect x="639.44" y="396.69" width="9.6" height="9.6" fill="#c0001e" stroke="#d890a0" stroke-width="0.5"/>
<rect x="643.61" y="400.86" width="9.6" height="9.6" fill="#c0001e" stroke="#d890a0" stroke-width="0.5"/>
<rect x="647.33" y="405.45" width="9.6" height="9.6" fill="#c0001e" stroke="#d890a0" stroke-width="0.5"/>
<rect x="650.54" y="410.40" width="9.6" height="9.6" fill="#c0001e" stroke="#d890a0" stroke-width="0.5"/>
<rect x="653.22" y="415.66" width="9.6" height="9.6" fill="#c0001e" stroke="#d890a0" stroke-width="0.5"/>
<rect x="655.34" y="421.17" width="9.6" height="9.6" fill="#c0001e" stroke="#d890a0" stroke-width="0.5"/>
<rect x="656.87" y="426.87" width="9.6" height="9.6" fill="#c0001e" stroke="#d890a0" stroke-width="0.5"/>
<rect x="657.79" y="432.70" width="9.6" height="9.6" fill="#c0001e" stroke="#d890a0" stroke-width="0.5"/>
<rect x="658.10" y="438.60" width="9.6" height="9.6" fill="#c0001e" stroke="#d890a0" stroke-width="0.5"/>
<rect x="657.79" y="444.50" width="9.6" height="9.6" fill="#c0001e" stroke="#d890a0" stroke-width="0.5"/>
<rect x="656.87" y="450.33" width="9.6" height="9.6" fill="#c0001e" stroke="#d890a0" stroke-width="0.5"/>
<rect x="655.34" y="456.03" width="9.6" height="9.6" fill="#c0001e" stroke="#d890a0" stroke-width="0.5"/>
<rect x="653.22" y="461.54" width="9.6" height="9.6" fill="#c0001e" stroke="#d890a0" stroke-width="0.5"/>
<rect x="650.54" y="466.80" width="9.6" height="9.6" fill="#c0001e" stroke="#d890a0" stroke-width="0.5"/>
<rect x="647.33" y="471.75" width="9.6" height="9.6" fill="#c0001e" stroke="#d890a0" stroke-width="0.5"/>
<rect x="643.61" y="476.34" width="9.6" height="9.6" fill="#c0001e" stroke="#d890a0" stroke-width="0.5"/>
<rect x="639.44" y="480.51" width="9.6" height="9.6" fill="#c0001e" stroke="#d890a0" stroke-width="0.5"/>
<rect x="634.85" y="484.23" width="9.6" height="9.6" fill="#c0001e" stroke="#d890a0" stroke-width="0.5"/>
<rect x="629.90" y="487.44" width="9.6" height="9.6" fill="#c0001e" stroke="#d890a0" stroke-width="0.5"/>
<rect x="624.64" y="490.12" width="9.6" height="9.6" fill="#c0001e" stroke="#d890a0" stroke-width="0.5"/>
<rect x="619.13" y="492.24" width="9.6" height="9.6" fill="#c0001e" stroke="#d890a0" stroke-width="0.5"/>
<rect x="613.43" y="493.77" width="9.6" height="9.6" fill="#c0001e" stroke="#d890a0" stroke-width="0.5"/>
<rect x="607.60" y="494.69" width="9.6" height="9.6" fill="#c0001e" stroke="#d890a0" stroke-width="0.5"/>
<rect x="601.70" y="495.00" width="9.6" height="9.6" fill="#c0001e" stroke="#d890a0" stroke-width="0.5"/>
<rect x="595.80" y="494.69" width="9.6" height="9.6" fill="#c0001e" stroke="#d890a0" stroke-width="0.5"/>
<rect x="589.97" y="493.77" width="9.6" height="9.6" fill="#c0001e" stroke="#d890a0" stroke-width="0.5"/>
<rect x="584.27" y="492.24" width="9.6" height="9.6" fill="#c0001e" stroke="#d890a0" stroke-width="0.5"/>
<rect x="578.76" y="490.12" width="9.6" height="9.6" fill="#c0001e" stroke="#d890a0" stroke-width="0.5"/>
<rect x="573.50" y="487.44" width="9.6" height="9.6" fill="#c0001e" stroke="#d890a0" stroke-width="0.5"/>
<rect x="568.55" y="484.23" width="9.6" height="9.6" fill="#c0001e" stroke="#d890a0" stroke-width="0.5"/>
<rect x="563.96" y="480.51" width="9.6" height="9.6" fill="#c0001e" stroke="#d890a0" stroke-width="0.5"/>
<rect x="559.79" y="476.34" width="9.6" height="9.6" fill="#c0001e" stroke="#d890a0" stroke-width="0.5"/>
<rect x="556.07" y="471.75" width="9.6" height="9.6" fill="#c0001e" stroke="#d890a0" stroke-width="0.5"/>
<rect x="552.86" y="466.80" width="9.6" height="9.6" fill="#c0001e" stroke="#d890a0" stroke-width="0.5"/>
<rect x="550.18" y="461.54" width="9.6" height="9.6" fill="#c0001e" stroke="#d890a0" stroke-width="0.5"/>
<rect x="548.06" y="456.03" width="9.6" height="9.6" fill="#c0001e" stroke="#d890a0" stroke-width="0.5"/>
<rect x="546.53" y="450.33" width="9.6" height="9.6" fill="#c0001e" stroke="#d890a0" stroke-width="0.5"/>
<rect x="545.61" y="444.50" width="9.6" height="9.6" fill="#c0001e" stroke="#d890a0" stroke-width="0.5"/>
<rect x="545.30" y="438.60" width="9.6" height="9.6" fill="#c0001e" stroke="#d890a0" stroke-width="0.5"/>
<rect x="545.61" y="432.70" width="9.6" height="9.6" fill="#c0001e" stroke="#d890a0" stroke-width="0.5"/>
<rect x="546.53" y="426.87" width="9.6" height="9.6" fill="#c0001e" stroke="#d890a0" stroke-width="0.5"/>
<rect x="548.06" y="421.17" width="9.6" height="9.6" fill="#c0001e" stroke="#d890a0" stroke-width="0.5"/>
<rect x="550.18" y="415.66" width="9.6" height="9.6" fill="#c0001e" stroke="#d890a0" stroke-width="0.5"/>
<rect x="552.86" y="410.40" width="9.6" height="9.6" fill="#c0001e" stroke="#d890a0" stroke-width="0.5"/>
<rect x="556.07" y="405.45" width="9.6" height="9.6" fill="#c0001e" stroke="#d890a0" stroke-width="0.5"/>
<rect x="559.79" y="400.86" width="9.6" height="9.6" fill="#c0001e" stroke="#d890a0" stroke-width="0.5"/>
<rect x="563.96" y="396.69" width="9.6" height="9.6" fill="#c0001e" stroke="#d890a0" stroke-width="0.5"/>
<rect x="568.55" y="392.97" width="9.6" height="9.6" fill="#c0001e" stroke="#d890a0" stroke-width="0.5"/>
<rect x="573.50" y="389.76" width="9.6" height="9.6" fill="#c0001e" stroke="#d890a0" stroke-width="0.5"/>
<rect x="578.76" y="387.08" width="9.6" height="9.6" fill="#c0001e" stroke="#d890a0" stroke-width="0.5"/>
<rect x="584.27" y="384.96" width="9.6" height="9.6" fill="#c0001e" stroke="#d890a0" stroke-width="0.5"/>
<rect x="589.97" y="383.43" width="9.6" height="9.6" fill="#c0001e" stroke="#d890a0" stroke-width="0.5"/>
<rect x="595.80" y="382.51" width="9.6" height="9.6" fill="#c0001e" stroke="#d890a0" stroke-width="0.5"/>
<rect x="601.70" y="370.60" width="9.6" height="9.6" fill="#0000a4" stroke="#8c8cc4" stroke-width="0.5"/>
<rect x="608.81" y="370.97" width="9.6" height="9.6" fill="#0000a4" stroke="#8c8cc4" stroke-width="0.5"/>
<rect x="615.84" y="372.09" width="9.6" height="9.6" fill="#0000a4" stroke="#8c8cc4" stroke-width="0.5"/>
<rect x="622.71" y="373.93" width="9.6" height="9.6" fill="#0000a4" stroke="#8c8cc4" stroke-width="0.5"/>
<rect x="629.36" y="376.48" width="9.6" height="9.6" fill="#0000a4" stroke="#8c8cc4" stroke-width="0.5"/>
<rect x="635.70" y="379.71" width="9.6" height="9.6" fill="#0000a4" stroke="#8c8cc4" stroke-width="0.5"/>
<rect x="641.67" y="383.59" width="9.6" height="9.6" fill="#0000a4" stroke="#8c8cc4" stroke-width="0.5"/>
<rect x="647.20" y="388.07" width="9.6" height="9.6" fill="#0000a4" stroke="#8c8cc4" stroke-width="0.5"/>
<rect x="652.23" y="393.10" width="9.6" height="9.6" fill="#0000a4" stroke="#8c8cc4" stroke-width="0.5"/>
<rect x="656.71" y="398.63" width="9.6" height="9.6" fill="#0000a4" stroke="#8c8cc4" stroke-width="0.5"/>
<rect x="660.59" y="404.60" width="9.6" height="9.6" fill="#0000a4" stroke="#8c8cc4" stroke-width="0.5"/>
<rect x="663.82" y="410.94" width="9.6" height="9.6" fill="#0000a4" stroke="#8c8cc4" stroke-width="0.5"/>
<rect x="666.37" y="417.59" width="9.6" height="9.6" fill="#0000a4" stroke="#8c8cc4" stroke-width="0.5"/>
<rect x="668.21" y="424.46" width="9.6" height="9.6" fill="#0000a4" stroke="#8c8cc4" stroke-width="0.5"/>
<rect x="669.33" y="431.49" width="9.6" height="9.6" fill="#0000a4" stroke="#8c8cc4" stroke-width="0.5"/>
<rect x="669.70" y="438.60" width="9.6" height="9.6" fill="#0000a4" stroke="#8c8cc4" stroke-width="0.5"/>
<rect x="669.33" y="445.71" width="9.6" height="9.6" fill="#0000a4" stroke="#8c8cc4" stroke-width="0.5"/>
<rect x="668.21" y="452.74" width="9.6" height="9.6" fill="#0000a4" stroke="#8c8cc4" stroke-width="0.5"/>
<rect x="666.37" y="459.61" width="9.6" height="9.6" fill="#0000a4" stroke="#8c8cc4" stroke-width="0.5"/>
<rect x="663.82" y="466.26" width="9.6" height="9.6" fill="#0000a4" stroke="#8c8cc4" stroke-width="0.5"/>
<rect x="660.59" y="472.60" width="9.6" height="9.6" fill="#0000a4" stroke="#8c8cc4" stroke-width="0.5"/>
<rect x="656.71" y="478.57" width="9.6" height="9.6" fill="#0000a4" stroke="#8c8cc4" stroke-width="0.5"/>
<rect x="652.23" y="484.10" width="9.6" height="9.6" fill="#0000a4" stroke="#8c8cc4" stroke-width="0.5"/>
<rect x="647.20" y="489.13" width="9.6" height="9.6" fill="#0000a4" stroke="#8c8cc4" stroke-width="0.5"/>
<rect x="641.67" y="493.61" width="9.6" height="9.6" fill="#0000a4" stroke="#8c8cc4" stroke-width="0.5"/>
<rect x="635.70" y="497.49" width="9.6" height="9.6" fill="#0000a4" stroke="#8c8cc4" stroke-width="0.5"/>
<rect x="629.36" y="500.72" width="9.6" height="9.6" fill="#0000a4" stroke="#8c8cc4" stroke-width="0.5"/>
<rect x="622.71" y="503.27" width="9.6" height="9.6" fill="#0000a4" stroke="#8c8cc4" stroke-width="0.5"/>
<rect x="615.84" y="505.11" width="9.6" height="9.6" fill="#0000a4" stroke="#8c8cc4" stroke-width="0.5"/>
<rect x="608.81" y="506.23" width="9.6" height="9.6" fill="#0000a4" stroke="#8c8cc4" stroke-width="0.5"/>
<rect x="601.70" y="506.60" width="9.6" height="9.6" fill="#0000a4" stroke="#8c8cc4" stroke-width="0.5"/>
<rect x="594.59" y="506.23" width="9.6" height="9.6" fill="#0000a4" stroke="#8c8cc4" stroke-width="0.5"/>
<rect x="587.56" y="505.11" width="9.6" height="9.6" fill="#0000a4" stroke="#8c8cc4" stroke-width="0.5"/>
<rect x="580.69" y="503.27" width="9.6" height="9.6" fill="#0000a4" stroke="#8c8cc4" stroke-width="0.5"/>
<rect x="574.04" y="500.72" width="9.6" height="9.6" fill="#0000a4" stroke="#8c8cc4" stroke-width="0.5"/>
<rect x="567.70" y="497.49" width="9.6" height="9.6" fill="#0000a4" stroke="#8c8cc4" stroke-width="0.5"/>
<rect x="561.73" y="493.61" width="9.6" height="9.6" fill="#0000a4" stroke="#8c8cc4" stroke-width="0.5"/>
<rect x="556.20" y="489.13" width="9.6" height="9.6" fill="#0000a4" stroke="#8c8cc4" stroke-width="0.5"/>
<rect x="551.17" y="484.10" width="9.6" height="9.6" fill="#0000a4" stroke="#8c8cc4" stroke-width="0.5"/>
<rect x="546.69" y="478.57" width="9.6" height="9.6" fill="#0000a4" stroke="#8c8cc4" stroke-width="0.5"/>
<rect x="542.81" y="472.60" width="9.6" height="9.6" fill="#0000a4" stroke="#8c8cc4" stroke-width="0.5"/>
<rect x="539.58" y="466.26" width="9.6" height="9.6" fill="#0000a4" stroke="#8c8cc4" stroke-width="0.5"/>
<rect x="537.03" y="459.61" width="9.6" height="9.6" fill="#0000a4" stroke="#8c8cc4" stroke-width="0.5"/>
<rect x="535.19" y="452.74" width="9.6" height="9.6" fill="#0000a4" stroke="#8c8cc4" stroke-width="0.5"/>
<rect x="534.07" y="445.71" width="9.6" height="9.6" fill="#0000a4" stroke="#8c8cc4" stroke-width="0.5"/>
<rect x="533.70" y="438.60" width="9.6" height="9.6" fill="#0000a4" stroke="#8c8cc4" stroke-width="0.5"/>
<rect x="534.07" y="431.49" width="9.6" height="9.6" fill="#0000a4" stroke="#8c8cc4" stroke-width="0.5"/>
<rect x="535.19" y="424.46" width="9.6" height="9.6" fill="#0000a4" stroke="#8c8cc4" stroke-width="0.5"/>
<rect x="537.03" y="417.59" width="9.6" height="9.6" fill="#0000a4" stroke="#8c8cc4" stroke-width="0.5"/>
<rect x="539.58" y="410.94" width="9.6" height="9.6" fill="#0000a4" stroke="#8c8cc4" stroke-width="0.5"/>
<rect x="542.81" y="404.60" width="9.6" height="9.6" fill="#0000a4" stroke="#8c8cc4" stroke-width="0.5"/>
<rect x="546.69" y="398.63" width="9.6" height="9.6" fill="#0000a4" stroke="#8c8cc4" stroke-width="0.5"/>
<rect x="551.17" y="393.10" width="9.6" height="9.6" fill="#0000a4" stroke="#8c8cc4" stroke-width="0.5"/>
<rect x="556.20" y="388.07" width="9.6" height="9.6" fill="#0000a4" stroke="#8c8cc4" stroke-width="0.5"/>
<rect x="561.73" y="383.59" width="9.6" height="9.6" fill="#0000a4" stroke="#8c8cc4" stroke-width="0.5"/>
<rect x="567.70" y="379.71" width="9.6" height="9.6" fill="#0000a4" stroke="#8c8cc4" stroke-width="0.5"/>
<rect x="574.04" y="376.48" width="9.6" height="9.6" fill="#0000a4" stroke="#8c8cc4" stroke-width="0.5"/>
<rect x="580.69" y="373.93" width="9.6" height="9.6" fill="#0000a4" stroke="#8c8cc4" stroke-width="0.5"/>
<rect x="587.56" y="372.09" width="9.6" height="9.6" fill="#0000a4" stroke="#8c8cc4" stroke-width="0.5"/>
<rect x="594.59" y="370.97" width="9.6" height="9.6" fill="#0000a4" stroke="#8c8cc4" stroke-width="0.5"/>
<rect x="617.01" y="292.90" width="9.6" height="9.6" fill="#c0001e" stroke="#d890a0" stroke-width="0.5"/>
<rect x="632.16" y="295.30" width="9.6" height="9.6" fill="#c0001e" stroke="#d890a0" stroke-width="0.5"/>
<rect x="646.97" y="299.27" width="9.6" height="9.6" fill="#c0001e" stroke="#d890a0" stroke-width="0.5"/>
<rect x="661.29" y="304.77" width="9.6" height="9.6" fill="#c0001e" stroke="#d890a0" stroke-width="0.5"/>
<rect x="687.81" y="320.08" width="9.6" height="9.6" fill="#c0001e" stroke="#d890a0" stroke-width="0.5"/>
<rect x="699.73" y="329.73" width="9.6" height="9.6" fill="#c0001e" stroke="#d890a0" stroke-width="0.5"/>
<rect x="710.57" y="340.57" width="9.6" height="9.6" fill="#c0001e" stroke="#d890a0" stroke-width="0.5"/>
<rect x="720.22" y="352.49" width="9.6" height="9.6" fill="#c0001e" stroke="#d890a0" stroke-width="0.5"/>
<rect x="735.53" y="379.01" width="9.6" height="9.6" fill="#c0001e" stroke="#d890a0" stroke-width="0.5"/>
<rect x="741.03" y="393.33" width="9.6" height="9.6" fill="#c0001e" stroke="#d890a0" stroke-width="0.5"/>
<rect x="745.00" y="408.14" width="9.6" height="9.6" fill="#c0001e" stroke="#d890a0" stroke-width="0.5"/>
<rect x="747.40" y="423.29" width="9.6" height="9.6" fill="#c0001e" stroke="#d890a0" stroke-width="0.5"/>
<rect x="747.40" y="453.91" width="9.6" height="9.6" fill="#c0001e" stroke="#d890a0" stroke-width="0.5"/>
<rect x="745.00" y="469.06" width="9.6" height="9.6" fill="#c0001e" stroke="#d890a0" stroke-width="0.5"/>
<rect x="741.03" y="483.87" width="9.6" height="9.6" fill="#c0001e" stroke="#d890a0" stroke-width="0.5"/>
<rect x="735.53" y="498.19" width="9.6" height="9.6" fill="#c0001e" stroke="#d890a0" stroke-width="0.5"/>
<rect x="720.22" y="524.71" width="9.6" height="9.6" fill="#c0001e" stroke="#d890a0" stroke-width="0.5"/>
<rect x="710.57" y="536.63" width="9.6" height="9.6" fill="#c0001e" stroke="#d890a0" stroke-width="0.5"/>
<rect x="699.73" y="547.47" width="9.6" height="9.6" fill="#c0001e" stroke="#d890a0" stroke-width="0.5"/>
<rect x="687.81" y="557.12" width="9.6" height="9.6" fill="#c0001e" stroke="#d890a0" stroke-width="0.5"/>
<rect x="661.29" y="572.43" width="9.6" height="9.6" fill="#c0001e" stroke="#d890a0" stroke-width="0.5"/>
<rect x="646.97" y="577.93" width="9.6" height="9.6" fill="#c0001e" stroke="#d890a0" stroke-width="0.5"/>
<rect x="632.16" y="581.90" width="9.6" height="9.6" fill="#c0001e" stroke="#d890a0" stroke-width="0.5"/>
<rect x="617.01" y="584.30" width="9.6" height="9.6" fill="#c0001e" stroke="#d890a0" stroke-width="0.5"/>
<rect x="586.39" y="584.30" width="9.6" height="9.6" fill="#c0001e" stroke="#d890a0" stroke-width="0.5"/>
<rect x="571.24" y="581.90" width="9.6" height="9.6" fill="#c0001e" stroke="#d890a0" stroke-width="0.5"/>
<rect x="556.43" y="577.93" width="9.6" height="9.6" fill="#c0001e" stroke="#d890a0" stroke-width="0.5"/>
<rect x="542.11" y="572.43" width="9.6" height="9.6" fill="#c0001e" stroke="#d890a0" stroke-width="0.5"/>
<rect x="515.59" y="557.12" width="9.6" height="9.6" fill="#c0001e" stroke="#d890a0" stroke-width="0.5"/>
<rect x="503.67" y="547.47" width="9.6" height="9.6" fill="#c0001e" stroke="#d890a0" stroke-width="0.5"/>
<rect x="492.83" y="536.63" width="9.6" height="9.6" fill="#c0001e" stroke="#d890a0" stroke-width="0.5"/>
<rect x="483.18" y="524.71" width="9.6" height="9.6" fill="#c0001e" stroke="#d890a0" stroke-width="0.5"/>
<rect x="467.87" y="498.19" width="9.6" height="9.6" fill="#c0001e" stroke="#d890a0" stroke-width="0.5"/>
<rect x="462.37" y="483.87" width="9.6" height="9.6" fill="#c0001e" stroke="#d890a0" stroke-width="0.5"/>
<rect x="458.40" y="469.06" width="9.6" height="9.6" fill="#c0001e" stroke="#d890a0" stroke-width="0.5"/>
<rect x="456.00" y="453.91" width="9.6" height="9.6" fill="#c0001e" stroke="#d890a0" stroke-width="0.5"/>
<rect x="456.00" y="423.29" width="9.6" height="9.6" fill="#c0001e" stroke="#d890a0" stroke-width="0.5"/>
<rect x="458.40" y="408.14" width="9.6" height="9.6" fill="#c0001e" stroke="#d890a0" stroke-width="0.5"/>
<rect x="462.37" y="393.33" width="9.6" height="9.6" fill="#c0001e" stroke="#d890a0" stroke-width="0.5"/>
<rect x="467.87" y="379.01" width="9.6" height="9.6" fill="#c0001e" stroke="#d890a0" stroke-width="0.5"/>
<rect x="483.18" y="352.49" width="9.6" height="9.6" fill="#c0001e" stroke="#d890a0" stroke-width="0.5"/>
<rect x="492.83" y="340.57" width="9.6" height="9.6" fill="#c0001e" stroke="#d890a0" stroke-width="0.5"/>
<rect x="503.67" y="329.73" width="9.6" height="9.6" fill="#c0001e" stroke="#d890a0" stroke-width="0.5"/>
<rect x="515.59" y="320.08" width="9.6" height="9.6" fill="#c0001e" stroke="#d890a0" stroke-width="0.5"/>
<rect x="542.11" y="304.77" width="9.6" height="9.6" fill="#c0001e" stroke="#d890a0" stroke-width="0.5"/>
<rect x="556.43" y="299.27" width="9.6" height="9.6" fill="#c0001e" stroke="#d890a0" stroke-width="0.5"/>
<rect x="571.24" y="295.30" width="9.6" height="9.6" fill="#c0001e" stroke="#d890a0" stroke-width="0.5"/>
<rect x="586.39" y="292.90" width="9.6" height="9.6" fill="#c0001e" stroke="#d890a0" stroke-width="0.5"/>
<rect x="618.22" y="281.47" width="9.6" height="9.6" fill="#0000a4" stroke="#8c8cc4" stroke-width="0.5"/>
<rect x="634.55" y="284.05" width="9.6" height="9.6" fill="#0000a4" stroke="#8c8cc4" stroke-width="0.5"/>
<rect x="650.52" y="288.33" width="9.6" height="9.6" fill="#0000a4" stroke="#8c8cc4" stroke-width="0.5"/>
<rect x="665.96" y="294.26" width="9.6" height="9.6" fill="#0000a4" stroke="#8c8cc4" stroke-width="0.5"/>
<rect x="694.57" y="310.78" width="9.6" height="9.6" fill="#0000a4" stroke="#8c8cc4" stroke-width="0.5"/>
<rect x="707.42" y="321.18" width="9.6" height="9.6" fill="#0000a4" stroke="#8c8cc4" stroke-width="0.5"/>
<rect x="719.12" y="332.88" width="9.6" height="9.6" fill="#0000a4" stroke="#8c8cc4" stroke-width="0.5"/>
<rect x="729.52" y="345.73" width="9.6" height="9.6" fill="#0000a4" stroke="#8c8cc4" stroke-width="0.5"/>
<rect x="746.04" y="374.34" width="9.6" height="9.6" fill="#0000a4" stroke="#8c8cc4" stroke-width="0.5"/>
<rect x="751.97" y="389.78" width="9.6" height="9.6" fill="#0000a4" stroke="#8c8cc4" stroke-width="0.5"/>
<rect x="756.25" y="405.75" width="9.6" height="9.6" fill="#0000a4" stroke="#8c8cc4" stroke-width="0.5"/>
<rect x="758.83" y="422.08" width="9.6" height="9.6" fill="#0000a4" stroke="#8c8cc4" stroke-width="0.5"/>
<rect x="758.83" y="455.12" width="9.6" height="9.6" fill="#0000a4" stroke="#8c8cc4" stroke-width="0.5"/>
<rect x="756.25" y="471.45" width="9.6" height="9.6" fill="#0000a4" stroke="#8c8cc4" stroke-width="0.5"/>
<rect x="751.97" y="487.42" width="9.6" height="9.6" fill="#0000a4" stroke="#8c8cc4" stroke-width="0.5"/>
<rect x="746.04" y="502.86" width="9.6" height="9.6" fill="#0000a4" stroke="#8c8cc4" stroke-width="0.5"/>
<rect x="729.52" y="531.47" width="9.6" height="9.6" fill="#0000a4" stroke="#8c8cc4" stroke-width="0.5"/>
<rect x="719.12" y="544.32" width="9.6" height="9.6" fill="#0000a4" stroke="#8c8cc4" stroke-width="0.5"/>
<rect x="707.42" y="556.02" width="9.6" height="9.6" fill="#0000a4" stroke="#8c8cc4" stroke-width="0.5"/>
<rect x="694.57" y="566.42" width="9.6" height="9.6" fill="#0000a4" stroke="#8c8cc4" stroke-width="0.5"/>
<rect x="665.96" y="582.94" width="9.6" height="9.6" fill="#0000a4" stroke="#8c8cc4" stroke-width="0.5"/>
<rect x="650.52" y="588.87" width="9.6" height="9.6" fill="#0000a4" stroke="#8c8cc4" stroke-width="0.5"/>
<rect x="634.55" y="593.15" width="9.6" height="9.6" fill="#0000a4" stroke="#8c8cc4" stroke-width="0.5"/>
<rect x="618.22" y="595.73" width="9.6" height="9.6" fill="#0000a4" stroke="#8c8cc4" stroke-width="0.5"/>
<rect x="585.18" y="595.73" width="9.6" height="9.6" fill="#0000a4" stroke="#8c8cc4" stroke-width="0.5"/>
<rect x="568.85" y="593.15" width="9.6" height="9.6" fill="#0000a4" stroke="#8c8cc4" stroke-width="0.5"/>
<rect x="552.88" y="588.87" width="9.6" height="9.6" fill="#0000a4" stroke="#8c8cc4" stroke-width="0.5"/>
<rect x="537.44" y="582.94" width="9.6" height="9.6" fill="#0000a4" stroke="#8c8cc4" stroke-width="0.5"/>
<rect x="508.83" y="566.42" width="9.6" height="9.6" fill="#0000a4" stroke="#8c8cc4" stroke-width="0.5"/>
<rect x="495.98" y="556.02" width="9.6" height="9.6" fill="#0000a4" stroke="#8c8cc4" stroke-width="0.5"/>
<rect x="484.28" y="544.32" width="9.6" height="9.6" fill="#0000a4" stroke="#8c8cc4" stroke-width="0.5"/>
<rect x="473.88" y="531.47" width="9.6" height="9.6" fill="#0000a4" stroke="#8c8cc4" stroke-width="0.5"/>
<rect x="457.36" y="502.86" width="9.6" height="9.6" fill="#0000a4" stroke="#8c8cc4" stroke-width="0.5"/>
<rect x="451.43" y="487.42" width="9.6" height="9.6" fill="#0000a4" stroke="#8c8cc4" stroke-width="0.5"/>
<rect x="447.15" y="471.45" width="9.6" height="9.6" fill="#0000a4" stroke="#8c8cc4" stroke-width="0.5"/>
<rect x="444.57" y="455.12" width="9.6" height="9.6" fill="#0000a4" stroke="#8c8cc4" stroke-width="0.5"/>
<rect x="444.57" y="422.08" width="9.6" height="9.6" fill="#0000a4" stroke="#8c8cc4" stroke-width="0.5"/>
<rect x="447.15" y="405.75" width="9.6" height="9.6" fill="#0000a4" stroke="#8c8cc4" stroke-width="0.5"/>
<rect x="451.43" y="389.78" width="9.6" height="9.6" fill="#0000a4" stroke="#8c8cc4" stroke-width="0.5"/>
<rect x="457.36" y="374.34" width="9.6" height="9.6" fill="#0000a4" stroke="#8c8cc4" stroke-width="0.5"/>
<rect x="473.88" y="345.73" width="9.6" height="9.6" fill="#0000a4" stroke="#8c8cc4" stroke-width="0.5"/>
<rect x="484.28" y="332.88" width="9.6" height="9.6" fill="#0000a4" stroke="#8c8cc4" stroke-width="0.5"/>
<rect x="495.98" y="321.18" width="9.6" height="9.6" fill="#0000a4" stroke="#8c8cc4" stroke-width="0.5"/>
<rect x="508.83" y="310.78" width="9.6" height="9.6" fill="#0000a4" stroke="#8c8cc4" stroke-width="0.5"/>
<rect x="537.44" y="294.26" width="9.6" height="9.6" fill="#0000a4" stroke="#8c8cc4" stroke-width="0.5"/>
<rect x="552.88" y="288.33" width="9.6" height="9.6" fill="#0000a4" stroke="#8c8cc4" stroke-width="0.5"/>
<rect x="568.85" y="284.05" width="9.6" height="9.6" fill="#0000a4" stroke="#8c8cc4" stroke-width="0.5"/>
<rect x="585.18" y="281.47" width="9.6" height="9.6" fill="#0000a4" stroke="#8c8cc4" stroke-width="0.5"/>
<rect x="601.70" y="276.60" width="9.6" height="9.6" fill="#0000a4" stroke="#8c8cc4" stroke-width="0.5"/>
<rect x="606.20" y="286.30" width="9.6" height="9.6" fill="#0000a4" stroke="#8c8cc4" stroke-width="0.5"/>
<rect x="597.20" y="286.30" width="9.6" height="9.6" fill="#0000a4" stroke="#8c8cc4" stroke-width="0.5"/>
<rect x="601.70" y="295.90" width="9.6" height="9.6" fill="#0000a4" stroke="#8c8cc4" stroke-width="0.5"/>
<rect x="682.70" y="298.30" width="9.6" height="9.6" fill="#0000a4" stroke="#8c8cc4" stroke-width="0.5"/>
<rect x="681.75" y="308.95" width="9.6" height="9.6" fill="#0000a4" stroke="#8c8cc4" stroke-width="0.5"/>
<rect x="673.95" y="304.45" width="9.6" height="9.6" fill="#0000a4" stroke="#8c8cc4" stroke-width="0.5"/>
<rect x="673.05" y="315.02" width="9.6" height="9.6" fill="#0000a4" stroke="#8c8cc4" stroke-width="0.5"/>
<rect x="742.00" y="357.60" width="9.6" height="9.6" fill="#0000a4" stroke="#8c8cc4" stroke-width="0.5"/>
<rect x="735.85" y="366.35" width="9.6" height="9.6" fill="#0000a4" stroke="#8c8cc4" stroke-width="0.5"/>
<rect x="731.35" y="358.55" width="9.6" height="9.6" fill="#0000a4" stroke="#8c8cc4" stroke-width="0.5"/>
<rect x="725.28" y="367.25" width="9.6" height="9.6" fill="#0000a4" stroke="#8c8cc4" stroke-width="0.5"/>
<rect x="763.70" y="438.60" width="9.6" height="9.6" fill="#0000a4" stroke="#8c8cc4" stroke-width="0.5"/>
<rect x="754.00" y="443.10" width="9.6" height="9.6" fill="#0000a4" stroke="#8c8cc4" stroke-width="0.5"/>
<rect x="754.00" y="434.10" width="9.6" height="9.6" fill="#0000a4" stroke="#8c8cc4" stroke-width="0.5"/>
<rect x="744.40" y="438.60" width="9.6" height="9.6" fill="#0000a4" stroke="#8c8cc4" stroke-width="0.5"/>
<rect x="742.00" y="519.60" width="9.6" height="9.6" fill="#0000a4" stroke="#8c8cc4" stroke-width="0.5"/>
<rect x="731.35" y="518.65" width="9.6" height="9.6" fill="#0000a4" stroke="#8c8cc4" stroke-width="0.5"/>
<rect x="735.85" y="510.85" width="9.6" height="9.6" fill="#0000a4" stroke="#8c8cc4" stroke-width="0.5"/>
<rect x="725.28" y="509.95" width="9.6" height="9.6" fill="#0000a4" stroke="#8c8cc4" stroke-width="0.5"/>
<rect x="682.70" y="578.90" width="9.6" height="9.6" fill="#0000a4" stroke="#8c8cc4" stroke-width="0.5"/>
<rect x="673.95" y="572.75" width="9.6" height="9.6" fill="#0000a4" stroke="#8c8cc4" stroke-width="0.5"/>
<rect x="681.75" y="568.25" width="9.6" height="9.6" fill="#0000a4" stroke="#8c8cc4" stroke-width="0.5"/>
<rect x="673.05" y="562.18" width="9.6" height="9.6" fill="#0000a4" stroke="#8c8cc4" stroke-width="0.5"/>
<rect x="601.70" y="600.60" width="9.6" height="9.6" fill="#0000a4" stroke="#8c8cc4" stroke-width="0.5"/>
<rect x="597.20" y="590.90" width="9.6" height="9.6" fill="#0000a4" stroke="#8c8cc4" stroke-width="0.5"/>
<rect x="606.20" y="590.90" width="9.6" height="9.6" fill="#0000a4" stroke="#8c8cc4" stroke-width="0.5"/>
<rect x="601.70" y="581.30" width="9.6" height="9.6" fill="#0000a4" stroke="#8c8cc4" stroke-width="0.5"/>
<rect x="520.70" y="578.90" width="9.6" height="9.6" fill="#0000a4" stroke="#8c8cc4" stroke-width="0.5"/>
<rect x="521.65" y="568.25" width="9.6" height="9.6" fill="#0000a4" stroke="#8c8cc4" stroke-width="0.5"/>
<rect x="529.45" y="572.75" width="9.6" height="9.6" fill="#0000a4" stroke="#8c8cc4" stroke-width="0.5"/>
<rect x="530.35" y="562.18" width="9.6" height="9.6" fill="#0000a4" stroke="#8c8cc4" stroke-width="0.5"/>
<rect x="461.40" y="519.60" width="9.6" height="9.6" fill="#0000a4" stroke="#8c8cc4" stroke-width="0.5"/>
<rect x="467.55" y="510.85" width="9.6" height="9.6" fill="#0000a4" stroke="#8c8cc4" stroke-width="0.5"/>
<rect x="472.05" y="518.65" width="9.6" height="9.6" fill="#0000a4" stroke="#8c8cc4" stroke-width="0.5"/>
<rect x="478.12" y="509.95" width="9.6" height="9.6" fill="#0000a4" stroke="#8c8cc4" stroke-width="0.5"/>
<rect x="439.70" y="438.60" width="9.6" height="9.6" fill="#0000a4" stroke="#8c8cc4" stroke-width="0.5"/>
<rect x="449.40" y="434.10" width="9.6" height="9.6" fill="#0000a4" stroke="#8c8cc4" stroke-width="0.5"/>
<rect x="449.40" y="443.10" width="9.6" height="9.6" fill="#0000a4" stroke="#8c8cc4" stroke-width="0.5"/>
<rect x="459.00" y="438.60" width="9.6" height="9.6" fill="#0000a4" stroke="#8c8cc4" stroke-width="0.5"/>
<rect x="461.40" y="357.60" width="9.6" height="9.6" fill="#0000a4" stroke="#8c8cc4" stroke-width="0.5"/>
<rect x="472.05" y="358.55" width="9.6" height="9.6" fill="#0000a4" stroke="#8c8cc4" stroke-width="0.5"/>
<rect x="467.55" y="366.35" width="9.6" height="9.6" fill="#0000a4" stroke="#8c8cc4" stroke-width="0.5"/>
<rect x="478.12" y="367.25" width="9.6" height="9.6" fill="#0000a4" stroke="#8c8cc4" stroke-width="0.5"/>
<rect x="520.70" y="298.30" width="9.6" height="9.6" fill="#0000a4" stroke="#8c8cc4" stroke-width="0.5"/>
<rect x="529.45" y="304.45" width="9.6" height="9.6" fill="#0000a4" stroke="#8c8cc4" stroke-width="0.5"/>
<rect x="521.65" y="308.95" width="9.6" height="9.6" fill="#0000a4" stroke="#8c8cc4" stroke-width="0.5"/>
<rect x="530.35" y="315.02" width="9.6" height="9.6" fill="#0000a4" stroke="#8c8cc4" stroke-width="0.5"/>
<rect x="662.85" y="332.69" width="9.6" height="9.6" fill="#0000a4" stroke="#8c8cc4" stroke-width="0.5"/>
<rect x="707.61" y="377.45" width="9.6" height="9.6" fill="#0000a4" stroke="#8c8cc4" stroke-width="0.5"/>
<rect x="724.00" y="438.60" width="9.6" height="9.6" fill="#0000a4" stroke="#8c8cc4" stroke-width="0.5"/>
<rect x="707.61" y="499.75" width="9.6" height="9.6" fill="#0000a4" stroke="#8c8cc4" stroke-width="0.5"/>
<rect x="662.85" y="544.51" width="9.6" height="9.6" fill="#0000a4" stroke="#8c8cc4" stroke-width="0.5"/>
<rect x="601.70" y="560.90" width="9.6" height="9.6" fill="#0000a4" stroke="#8c8cc4" stroke-width="0.5"/>
<rect x="540.55" y="544.51" width="9.6" height="9.6" fill="#0000a4" stroke="#8c8cc4" stroke-width="0.5"/>
<rect x="495.79" y="499.75" width="9.6" height="9.6" fill="#0000a4" stroke="#8c8cc4" stroke-width="0.5"/>
<rect x="479.40" y="438.60" width="9.6" height="9.6" fill="#0000a4" stroke="#8c8cc4" stroke-width="0.5"/>
<rect x="495.79" y="377.45" width="9.6" height="9.6" fill="#0000a4" stroke="#8c8cc4" stroke-width="0.5"/>
<rect x="540.55" y="332.69" width="9.6" height="9.6" fill="#0000a4" stroke="#8c8cc4" stroke-width="0.5"/>
<rect x="601.70" y="316.30" width="9.6" height="9.6" fill="#0000a4" stroke="#8c8cc4" stroke-width="0.5"/>
<rect x="601.70" y="433.60" width="9.6" height="9.6" fill="#0a86b0" stroke="#60a8c8" stroke-width="0.5"/>
<rect x="606.70" y="438.60" width="9.6" height="9.6" fill="#0a86b0" stroke="#60a8c8" stroke-width="0.5"/>
<rect x="596.70" y="438.60" width="9.6" height="9.6" fill="#0a86b0" stroke="#60a8c8" stroke-width="0.5"/>
<rect x="601.70" y="443.10" width="9.6" height="9.6" fill="#0a86b0" stroke="#60a8c8" stroke-width="0.5"/>
</g>
</svg></div><div class="abs" style="left:1133px;top:108px;width:11px;height:690px;background:#f0f0f0"></div><div class="abs" style="left:1144px;top:108px;width:12px;height:690px;background:#e7e7e7"></div>
<div class="abs" style="left:1135px;top:340px;width:21px;height:144px;background:#1a84f9;border-radius:5px 0 0 5px"></div>
<div class="abs" style="left:1135px;top:488px;width:21px;height:82px;background:#dedede;border-radius:5px 0 0 5px"></div>
<div class="abs" style="left:1075px;top:404px;width:141px;height:16px;line-height:16px;font-size:13px;color:#fff;text-align:center;transform:rotate(-90deg);white-space:nowrap;letter-spacing:0.3px">Eigenschafteneditor</div>
<div class="abs" style="left:1105px;top:521px;width:81px;height:16px;line-height:16px;font-size:13px;color:#222;text-align:center;transform:rotate(-90deg);white-space:nowrap;letter-spacing:0.3px">Layerliste</div>
<div class="abs" style="left:1156px;top:108px;width:299px;height:690.5px;background:#ececec;border-left:1px solid #f4f4f4"></div>
<div class="abs" style="left:1156px;top:108px;width:299px;height:22px;background:linear-gradient(#dedede,#d4d4d4);border-bottom:1px solid #c8c8c8"></div>
<svg style="left:1156px;top:111px" width="36" height="16"><circle cx="8" cy="7" r="6.800" fill="#5a5a5a"/><path d="M5.300 4.300 L10.700 9.700 M10.700 4.300 L5.300 9.700" stroke="#e0e0e0" stroke-width="1.8" stroke-linecap="round"/><circle cx="26" cy="7" r="6.800" fill="#5a5a5a"/><rect x="24.500" y="4" width="5" height="4" fill="none" stroke="#e0e0e0" stroke-width="1.100" rx="0.800"/><rect x="22.500" y="6" width="5" height="4" fill="#5a5a5a" stroke="#e0e0e0" stroke-width="1.100" rx="0.800"/></svg>
<div class="abs" style="left:1222px;top:111px;width:200px;text-align:center;font-size:12px;line-height:16px;color:#3a3a3a;letter-spacing:0px">Eigenschafteneditor</div>
<div class="lbl" style="left:1168px;top:146px;text-align:left;letter-spacing:0.2px">Auswahl:</div>
<div class="abs" style="left:1230.5px;top:143px;width:211.5px;height:21.5px;background:#ffd6d6;border-radius:5px"></div>
<div class="abs" style="left:1220px;top:142.5px;width:232px;height:1px;background:linear-gradient(90deg,rgba(240,96,96,0),#f06464 14px,#f06464 calc(100% - 14px),rgba(240,96,96,0));box-shadow:0 0 1.5px rgba(240,100,100,.55)"></div>
<div class="abs" style="left:1220px;top:164px;width:232px;height:1px;background:linear-gradient(90deg,rgba(240,96,96,0),#f06464 14px,#f06464 calc(100% - 14px),rgba(240,96,96,0));box-shadow:0 0 1.5px rgba(240,100,100,.55)"></div>
<div class="abs" style="left:1230px;top:133px;width:1px;height:40px;background:linear-gradient(180deg,rgba(240,96,96,0),#f06464 9px,#f06464 calc(100% - 9px),rgba(240,96,96,0));box-shadow:0 0 1.5px rgba(240,100,100,.55)"></div>
<div class="abs" style="left:1441.5px;top:133px;width:1px;height:40px;background:linear-gradient(180deg,rgba(240,96,96,0),#f06464 9px,#f06464 calc(100% - 9px),rgba(240,96,96,0));box-shadow:0 0 1.5px rgba(240,100,100,.55)"></div>
<div class="abs" style="left:1234px;top:146px;font-size:13px;line-height:16px;color:#2a1414;letter-spacing:0.2px">Text [12]</div>
<div class="abs cmbb" style="left:1423px;top:146px;width:16px;height:16px;border-radius:4px;background:linear-gradient(#3f78e8,#2c62dc)"><svg style="left:0;top:0" width="16" height="16"><path d="M5 6.5 L8 3.7 L11 6.5 M5 9.5 L8 12.3 L11 9.5" fill="none" stroke="#fff" stroke-width="1.5" stroke-linecap="round" stroke-linejoin="round"/></svg></div>
<div class="gt" style="left:1175px;top:170px;letter-spacing:0px">Allgemeine Eigenschaften</div>
<div class="grp" style="left:1168px;top:184px;width:274px;height:185px"></div>
<div class="lbl" style="left:1097px;width:200.03px;top:198.5px;letter-spacing:0.027px">Layer:</div>
<div class="lbl" style="left:1097px;width:199.87px;top:224.5px;letter-spacing:-0.130px">Farbe:</div>
<div class="lbl" style="left:1097px;width:200.16px;top:248.5px;letter-spacing:0.159px">Linienbreite:</div>
<div class="lbl" style="left:1097px;width:200.19px;top:272.5px;letter-spacing:0.194px">Linientyp:</div>
<div class="lbl" style="left:1097px;width:200.24px;top:296.5px;letter-spacing:0.245px">Linientypskalierung:</div>
<div class="lbl" style="left:1097px;width:200.05px;top:319.5px;letter-spacing:0.050px">Reihenfolge:</div>
<div class="lbl" style="left:1097px;width:200.04px;top:342.5px;letter-spacing:0.041px">Handle:</div>
<div class="cmb g1" style="left:1299.5px;top:196px;width:104px;padding-left:25.5px"><svg style="left:3.5px;top:5.500px" width="17" height="11"><rect x="0.500" y="0.500" width="15" height="8.500" fill="#fff" stroke="#1c1c1c" stroke-width="1"/></svg>0<b><svg style="left:0;top:0" width="16" height="16"><path d="M5 6.5 L8 3.7 L11 6.5 M5 9.5 L8 12.3 L11 9.5" fill="none" stroke="#fff" stroke-width="1.5" stroke-linecap="round" stroke-linejoin="round"/></svg></b></div>
<div class="abs" style="left:1407px;top:193px;width:26px;height:26px;border:1px solid #b0b0b0;background:#ececec"><svg style="left:0;top:0" width="24" height="24"><path d="M6 8 H18 M6 12 H18 M6 16 H18" stroke="#7a7a7a" stroke-width="1.6"/></svg></div>
<div class="cmb g1" style="left:1299.5px;top:221.5px;width:132.5px;padding-left:25.5px"><svg style="left:3.5px;top:5.500px" width="17" height="11"><rect x="0.500" y="0.500" width="15" height="8.500" fill="#fff" stroke="#1c1c1c" stroke-width="1"/></svg>Von Layer<b><svg style="left:0;top:0" width="16" height="16"><path d="M5 6.5 L8 3.7 L11 6.5 M5 9.5 L8 12.3 L11 9.5" fill="none" stroke="#fff" stroke-width="1.5" stroke-linecap="round" stroke-linejoin="round"/></svg></b></div>
<div class="cmb g1" style="left:1299.5px;top:245.5px;width:132.5px;padding-left:25.5px"><svg style="left:4px;top:9px" width="16" height="3"><path d="M0 1.5H15" stroke="#222" stroke-width="1"/></svg>Von Layer<b><svg style="left:0;top:0" width="16" height="16"><path d="M5 6.5 L8 3.7 L11 6.5 M5 9.5 L8 12.3 L11 9.5" fill="none" stroke="#fff" stroke-width="1.5" stroke-linecap="round" stroke-linejoin="round"/></svg></b></div>
<div class="cmb g1" style="left:1299.5px;top:269px;width:132.5px;padding-left:3.5px">Von Layer<b><svg style="left:0;top:0" width="16" height="16"><path d="M5 6.5 L8 3.7 L11 6.5 M5 9.5 L8 12.3 L11 9.5" fill="none" stroke="#fff" stroke-width="1.5" stroke-linecap="round" stroke-linejoin="round"/></svg></b></div>
<div class="inp" style="left:1299.5px;top:294px;width:132.5px">1</div>
<div class="inp" style="left:1299.5px;top:317px;width:132.5px">*VARIIERT*</div>
<div class="inp dis" style="left:1299.5px;top:340px;width:132.5px">*VARIIERT*</div>
<div class="gt" style="left:1175px;top:374px;letter-spacing:0px">Spezifische Eigenschaften</div>
<div class="grp" style="left:1168px;top:388px;width:274px;height:402px"></div>
<div class="lbl" style="left:1065px;width:199.99px;top:400.5px;letter-spacing:-0.011px">Einfach:</div>
<div class="cmb" style="left:1267.5px;top:397.5px;width:164.5px;height:20.5px">Nein<b><svg style="left:0;top:0" width="16" height="16"><path d="M5 6.5 L8 3.7 L11 6.5 M5 9.5 L8 12.3 L11 9.5" fill="none" stroke="#fff" stroke-width="1.5" stroke-linecap="round" stroke-linejoin="round"/></svg></b></div>
<div class="lbl" style="left:1065px;width:199.99px;top:423.5px;letter-spacing:-0.014px">Text:</div>
<div class="inp" style="left:1267.5px;top:421px;width:164.5px">*VARIIERT*</div>
<div class="lbl" style="left:1065px;width:200.23px;top:446.5px;letter-spacing:0.235px">Klartext:</div>
<div class="inp dis" style="left:1267.5px;top:444px;width:164.5px">*VARIIERT*</div>
<div class="lbl" style="left:1065px;width:200.34px;top:470.5px;letter-spacing:0.343px">Schriftart:</div>
<div class="cmb" style="left:1267.5px;top:467.5px;width:164.5px;height:20.5px">Arial<b><svg style="left:0;top:0" width="16" height="16"><path d="M5 6.5 L8 3.7 L11 6.5 M5 9.5 L8 12.3 L11 9.5" fill="none" stroke="#fff" stroke-width="1.5" stroke-linecap="round" stroke-linejoin="round"/></svg></b></div>
<div class="lbl" style="left:1065px;width:200.14px;top:493.5px;letter-spacing:0.136px">Texthöhe:</div>
<div class="inp" style="left:1267.5px;top:491px;width:164.5px">16</div>
<div class="lbl" style="left:1065px;width:200.20px;top:516.5px;letter-spacing:0.201px">Textbreite:</div>
<div class="inp" style="left:1267.5px;top:514px;width:164.5px">0</div>
<div class="lbl" style="left:1065px;width:200.10px;top:539.5px;letter-spacing:0.102px">Textwinkel:</div>
<div class="inp" style="left:1267.5px;top:537px;width:164.5px">0</div>
<div class="lbl" style="left:1065px;width:200.07px;top:562.5px;letter-spacing:0.067px">X Skalierung:</div>
<div class="inp" style="left:1267.5px;top:560px;width:164.5px">1</div>
<div class="lbl" style="left:1065px;width:200.14px;top:586.5px;letter-spacing:0.137px">Fett:</div>
<div class="cmb" style="left:1267.5px;top:583.5px;width:164.5px;height:20.5px">Nein<b><svg style="left:0;top:0" width="16" height="16"><path d="M5 6.5 L8 3.7 L11 6.5 M5 9.5 L8 12.3 L11 9.5" fill="none" stroke="#fff" stroke-width="1.5" stroke-linecap="round" stroke-linejoin="round"/></svg></b></div>
<div class="lbl" style="left:1065px;width:200.11px;top:610.5px;letter-spacing:0.109px">Kursiv:</div>
<div class="cmb" style="left:1267.5px;top:607.5px;width:164.5px;height:20.5px">Nein<b><svg style="left:0;top:0" width="16" height="16"><path d="M5 6.5 L8 3.7 L11 6.5 M5 9.5 L8 12.3 L11 9.5" fill="none" stroke="#fff" stroke-width="1.5" stroke-linecap="round" stroke-linejoin="round"/></svg></b></div>
<div class="lbl" style="left:1065px;width:200.18px;top:633.5px;letter-spacing:0.180px">Linienabstand:</div>
<div class="inp" style="left:1267.5px;top:631px;width:164.5px">1</div>
<div class="lbl" style="left:1065px;width:200.10px;top:675.5px;letter-spacing:0.102px">X:</div>
<div class="inp" style="left:1267.5px;top:673px;width:164.5px">*VARIIERT*</div>
<div class="lbl" style="left:1065px;width:200.46px;top:698.5px;letter-spacing:0.461px">Y:</div>
<div class="inp" style="left:1267.5px;top:696px;width:164.5px">*VARIIERT*</div>
<div class="lbl" style="left:1065px;width:200.21px;top:739.5px;letter-spacing:0.214px">Horizontal:</div>
<div class="cmb" style="left:1267.5px;top:736.5px;width:164.5px;height:20.5px">Zentrum<b><svg style="left:0;top:0" width="16" height="16"><path d="M5 6.5 L8 3.7 L11 6.5 M5 9.5 L8 12.3 L11 9.5" fill="none" stroke="#fff" stroke-width="1.5" stroke-linecap="round" stroke-linejoin="round"/></svg></b></div>
<div class="lbl" style="left:1065px;width:200.25px;top:763.5px;letter-spacing:0.250px">Vertikal:</div>
<div class="cmb" style="left:1267.5px;top:760.5px;width:164.5px;height:20.5px">Mitte<b><svg style="left:0;top:0" width="16" height="16"><path d="M5 6.5 L8 3.7 L11 6.5 M5 9.5 L8 12.3 L11 9.5" fill="none" stroke="#fff" stroke-width="1.5" stroke-linecap="round" stroke-linejoin="round"/></svg></b></div>
<div class="bold" style="left:1177px;top:654.7px;letter-spacing:0.2px">Text Position</div>
<div class="bold" style="left:1177px;top:718.7px;letter-spacing:0.2px">Ausrichtung</div>
<div class="abs" style="left:1261px;top:114px;width:80px;height:80px;border-radius:50%;background:radial-gradient(circle closest-side,rgba(228,234,244,.14) 0,rgba(228,234,244,.14) 75%,rgba(150,172,205,.28) 79%,rgba(140,165,200,.5) 85%,rgba(135,160,198,.58) 93%,rgba(140,165,200,.35) 96.5%,rgba(140,165,200,0) 99%)"></div>
<svg style="left:0;top:0" width="1500" height="844"><path d="M1301.1 154.1 L1301.1 175 L1306 170.800 L1311.600 181 L1315 179.400 L1310.500 169.300 L1315.800 169 Z" fill="#fff" stroke="#000" stroke-width="1.300" stroke-linejoin="miter"/></svg><div class="abs" style="left:1454px;top:108px;width:46px;height:690.5px;border-left:1px solid #c8c8c8;background:linear-gradient(90deg,#f0f0f0,#e8e8e8 40%,#c8c8c8 94%,#b4b4b4)"></div>
<div class="abs" style="left:1462px;top:116px;width:27px;height:2px;background-image:linear-gradient(90deg,#aaa 2px,transparent 2px);background-size:6px 2px"></div>
<div class="selbtn" style="left:1456px;top:120px;width:48px;height:44px;background:#bcbcbc"></div>
<div class="selbtn" style="left:1456px;top:270px;width:48px;height:44px;background:#bcbcbc"></div>
<div class="selbtn" style="left:1456px;top:417px;width:48px;height:44px;background:#bcbcbc"></div>
<div class="abs" style="left:1457px;top:261px;width:43px;height:1px;background-image:linear-gradient(90deg,#666 1px,transparent 1px);background-size:3px 1px"></div>
<div class="abs" style="left:1457px;top:410px;width:43px;height:1px;background-image:linear-gradient(90deg,#666 1px,transparent 1px);background-size:3px 1px"></div>
<svg style="left:0;top:0" width="1500" height="844">
<rect x="1463.5" y="127.4" width="27" height="26.800" fill="#fff" stroke="#444" stroke-width="0.800"/><rect x="1463.100" y="127.0" width="27.800" height="5" fill="#000"/><rect x="1464" y="127.7" width="3.300" height="3.300" fill="#fff"/>
<rect x="1463.5" y="174.4" width="27" height="26.800" fill="#fff" stroke="#444" stroke-width="0.800"/><rect x="1463.100" y="174.0" width="27.800" height="5" fill="#000"/><rect x="1464" y="174.7" width="3.300" height="3.300" fill="#fff"/>
<rect x="1463.5" y="220.3" width="27" height="26.800" fill="#fff" stroke="#444" stroke-width="0.800"/><rect x="1463.100" y="219.9" width="27.800" height="5" fill="#000"/><rect x="1464" y="220.6" width="3.300" height="3.300" fill="#fff"/>
<rect x="1463.5" y="276.5" width="27" height="26.800" fill="#fff" stroke="#444" stroke-width="0.800"/><rect x="1463.100" y="276.1" width="27.800" height="5" fill="#000"/><rect x="1464" y="276.8" width="3.300" height="3.300" fill="#fff"/>
<rect x="1463.5" y="323.5" width="27" height="26.800" fill="#fff" stroke="#444" stroke-width="0.800"/><rect x="1463.100" y="323.1" width="27.800" height="5" fill="#000"/><rect x="1464" y="323.8" width="3.300" height="3.300" fill="#fff"/>
<rect x="1463.5" y="369.7" width="27" height="26.800" fill="#fff" stroke="#444" stroke-width="0.800"/><rect x="1463.100" y="369.3" width="27.800" height="5" fill="#000"/><rect x="1464" y="370.0" width="3.300" height="3.300" fill="#fff"/>
<rect x="1463.5" y="425.4" width="27" height="26.800" fill="#fff" stroke="#444" stroke-width="0.800"/><rect x="1463.100" y="425.0" width="27.800" height="5" fill="#000"/><rect x="1464" y="425.7" width="3.300" height="3.300" fill="#fff"/>
<rect x="1463.5" y="472.7" width="27" height="26.800" fill="#fff" stroke="#444" stroke-width="0.800"/><rect x="1463.100" y="472.3" width="27.800" height="5" fill="#000"/><rect x="1464" y="473.0" width="3.300" height="3.300" fill="#fff"/>
<path d="M1470.500 139.500 L1478 136 V146 L1470.500 149 Z" fill="#8c8c8c" stroke="#555" stroke-width="0.600"/><path d="M1472.500 140.500 L1480 137 V147 L1472.500 150 Z" fill="#c8c8c8" stroke="#666" stroke-width="0.500"/><path d="M1475 140.500 L1484 136.500 V146.500 L1475 150.300 Z" fill="#f2f2f2" stroke="#666" stroke-width="0.600"/><path d="M1477.500 147.500 L1482 139.500 L1481.500 145.500 Z" fill="#f8c0c0" stroke="#e02020" stroke-width="0.600"/>
<rect x="1470.200" y="184.400" width="10.600" height="7.200" fill="#fbeec4" stroke="#555" stroke-width="0.800"/><circle cx="1479.300" cy="191" r="4.200" fill="#fbeec4" fill-opacity="0.800" stroke="#555" stroke-width="0.800"/>
<rect x="1468.700" y="230" width="16.600" height="11.300" rx="2.200" fill="#f4f4f2" stroke="#bccbe4" stroke-width="1"/>
<g fill="#111"><rect x="1467" y="283" width="4" height="3.500"/><rect x="1467" y="290" width="4" height="3.500"/><rect x="1467" y="297" width="4" height="3.500"/></g><g fill="#fff" stroke="#555" stroke-width="0.8"><rect x="1473.5" y="282.500" width="14" height="4.500"/><rect x="1473.5" y="289.500" width="14" height="4.500"/><rect x="1473.5" y="296.500" width="14" height="4.500"/></g>
<path d="M1469.500 331 H1484.500 L1478.700 338.500 V346 L1475.300 344.500 V338.500 Z" fill="#8e8e8e" stroke="#666" stroke-width="0.600"/><ellipse cx="1477" cy="331.300" rx="7.300" ry="1.300" fill="#c8c8c8" stroke="#777" stroke-width="0.500"/>
<path d="M1469 378 V391 L1474 387.500 V381.500 Z" fill="#eee" stroke="#555" stroke-width="0.800"/><rect x="1474" y="381" width="10.500" height="7" rx="1.500" fill="#8a8a8a"/><path d="M1466.500 384.500 H1487" stroke="#f08080" stroke-width="0.700" stroke-dasharray="2 1"/>
<g stroke="#777" stroke-width="0.7"><path d="M1467 433H1481M1467 436H1479M1467 439H1482M1467 442H1480"/></g><rect x="1465" y="446" width="24" height="4.500" fill="#fff" stroke="#333" stroke-width="0.6"/>
<rect x="1470.300" y="480.500" width="13.500" height="14.500" rx="1.200" fill="#c08a38" stroke="#8a5a18" stroke-width="0.600"/><rect x="1472" y="482.500" width="10" height="11.500" fill="#ececec"/><path d="M1473.500 486H1480.500M1473.500 488.500H1480.500M1473.500 491H1479" stroke="#c4c4c4" stroke-width="0.800"/><rect x="1474.500" y="479" width="5" height="3.200" rx="0.800" fill="#a0a098" stroke="#777" stroke-width="0.400"/>
</svg>
<div class="abs" style="left:1466px;top:446px;font-size:4.5px;line-height:5px;color:#444;white-space:nowrap;letter-spacing:0.2px">C&nbsp;&nbsp;&nbsp;command</div>
</body></html>
